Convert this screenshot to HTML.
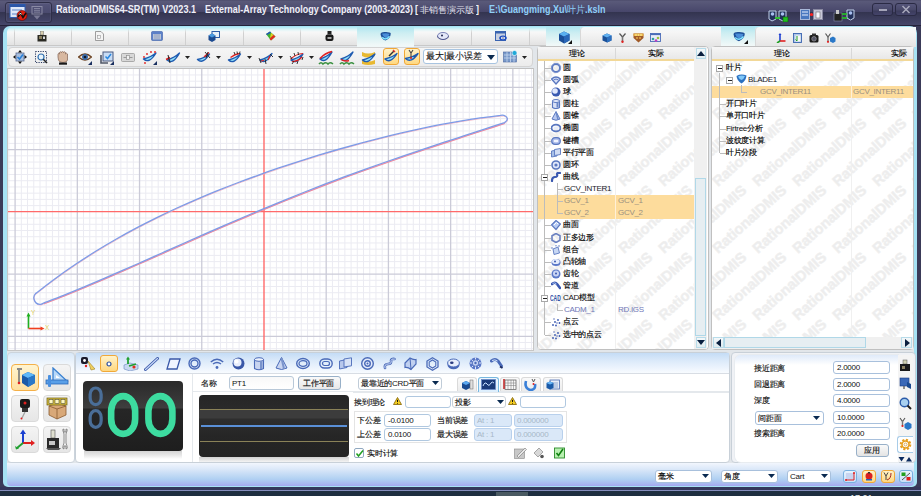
<!DOCTYPE html>
<html><head><meta charset="utf-8">
<style>
*{box-sizing:border-box;margin:0;padding:0}
html,body{width:921px;height:496px;overflow:hidden}
body{position:relative;background:#3a3a58;font-family:"Liberation Sans",sans-serif;font-size:11px;color:#000}
.a{position:absolute}
#title{left:0;top:0;width:921px;height:26px;background:linear-gradient(#484766 0,#5a5a7a 1px,#47466a 12px,#33344f 12px,#45466a 25px,#24223a 25px,#24223a 26px)}
#frame{left:3px;top:25.5px;width:914px;height:461.5px;border-radius:7px 7px 5px 5px;background:#a6e2f4}
#tabs{left:6.5px;top:27px;width:907.5px;height:19px;background:linear-gradient(#b0eaf6 0,#e4f6f8 3px,#f8f8f8 5px,#e4e4e4 17px);border-bottom:1px solid #c8c8c8;border-radius:5px 5px 0 0}
#tb{left:8px;top:47px;width:525px;height:20px;background:linear-gradient(#f6f6f6,#ececec);border:1px solid #d4d4d4;border-radius:4px}
#vp{left:8px;top:69px;width:525px;height:281px;background:#fff;overflow:hidden}
#mid{left:536.5px;top:46px;width:172px;height:304px;background:#fff;border:1px solid #c0c0c0;border-radius:4px}
#right{left:711px;top:46px;width:203px;height:304px;background:#fff;border:1px solid #c0c0c0;border-radius:4px}
#bottom{left:6.5px;top:46px;width:907.5px;height:417px;background:#e2e6ea}
#status{left:6.5px;top:463px;width:907.5px;height:22.5px;background:linear-gradient(#f2f6fd,#d8e6f8 30%,#b0d0f2 70%,#a8b4f0 92%,#a6a6f0);border-radius:0 0 4px 4px}
#task{left:0;top:487px;width:921px;height:9px;background:linear-gradient(#34365a 0,#34365a 2.6px,#8088b8 2.6px,#8890c0 4.2px,#1e2e40 4.2px)}
.hd{top:47px;font-size:9px;line-height:12px;color:#000}
.tr{font-size:8px;line-height:12px;color:#111;white-space:nowrap;letter-spacing:-0.3px}
.tr .cj{font-size:8px;color:#000;-webkit-text-stroke:0.15px #000}
.lb{font-size:8px;line-height:11px;color:#111;white-space:nowrap;letter-spacing:-0.25px}
.cj{font-size:8px;-webkit-text-stroke:0.15px currentColor}
.inp{border:1px solid #b0c8e0;border-radius:3px;background:#fff}
.tt{color:#f0f0f8;font-weight:bold;font-size:10px;top:4px;line-height:12px}
</style></head><body>
<div id="title" class="a"></div>
<div class="a" style="left:5px;top:2px;width:47px;height:21px;border:1px solid #2e2e48;border-radius:3px;background:linear-gradient(#55557a,#4a4a6e 10px,#3a3b58 10px,#44456a);box-shadow:inset 0 0 0 1px rgba(255,255,255,0.06)"></div>
<svg class="a" style="left:9px;top:4px" width="20" height="18" viewBox="0 0 20 18">
<rect x="1" y="0.5" width="15" height="13" fill="#dfe8f8" stroke="#2f5db0"/>
<rect x="1" y="0.5" width="15" height="2.5" fill="#2a56a8"/>
<rect x="3" y="5" width="10" height="2" fill="#9db6e0"/><rect x="3" y="9" width="6" height="2" fill="#9db6e0"/>
<circle cx="13" cy="11.5" r="5" fill="#e02010" stroke="#600" stroke-width="0.6"/>
<path d="M9 13 L11.5 9 L14 13.5 L17 9" stroke="#111" stroke-width="1.6" fill="none"/>
<path d="M10.5 10.5 L11.5 9 L12.3 10.5" stroke="#fff" stroke-width="0.9" fill="none"/>
</svg>
<svg class="a" style="left:31px;top:6px" width="13" height="14" viewBox="0 0 13 14">
<rect x="1" y="0.5" width="10" height="7.5" fill="none" stroke="#8a8aa4" stroke-width="1"/>
<path d="M3 2.5H9M3 4.3H9M3 6.1H9" stroke="#8a8aa4" stroke-width="0.9"/>
<path d="M2.5 9.5 H9.5 L6 13.5Z" fill="#7a7a96"/>
</svg>
<div class="a tt" style="left:56px;transform:scaleX(0.91);transform-origin:0 0">RationalDMIS64-SR(TM) V2023.1</div>
<div class="a tt" style="left:204.5px;transform:scaleX(0.894);transform-origin:0 0">External-Array Technology Company (2003-2023)</div>
<div class="a tt" style="left:415px;transform:scaleX(0.9);transform-origin:0 0">[</div>
<div class="a" style="left:420px;top:4px;line-height:12px;color:#e0e0ea;font-size:9px;letter-spacing:0px;font-family:'Liberation Serif',serif">非销售演示版</div>
<div class="a tt" style="left:476px;transform:scaleX(0.9);transform-origin:0 0">]</div>
<div class="a tt" style="left:488.7px;color:#8fd0f8;transform:scaleX(0.9);transform-origin:0 0">E:\Guangming.Xu\<span style="font-weight:normal;font-family:'Liberation Serif',serif">叶片</span>.ksln</div>
<!-- title right icons -->
<svg class="a" style="left:768px;top:10px" width="21" height="12" viewBox="0 0 21 12">
<path d="M1 1 H8 V9 L4 11 L1 9Z" fill="#22305a" stroke="#c0d0e8" stroke-width="1"/>
<path d="M11 1 H18 V9 L15 11 L11 9Z" fill="#22305a" stroke="#c0d0e8" stroke-width="1"/>
<circle cx="4.5" cy="4" r="1.8" fill="#a8c0f0"/><circle cx="14.5" cy="4" r="1.8" fill="#a8c0f0"/>
<rect x="7" y="7" width="5" height="2" fill="#30c030"/>
<rect x="15" y="7" width="5" height="5" fill="#20c020" stroke="#0a600a" stroke-width="0.6"/>
</svg>
<svg class="a" style="left:800px;top:9px" width="24" height="12" viewBox="0 0 24 12">
<rect x="0.5" y="0.5" width="9" height="10" fill="#4a78c0" stroke="#a8b8d8"/>
<path d="M2 3 H8 M2 6 H8" stroke="#e8f0ff" stroke-width="1"/>
<rect x="13.5" y="0.5" width="9" height="10" fill="#c8c8d8" stroke="#8888a0"/>
<rect x="16" y="3" width="4" height="6" fill="#f8f8ff" stroke="#555" stroke-width="0.5"/>
<circle cx="11.5" cy="5.5" r="1.6" fill="#ff2020"/>
</svg>
<svg class="a" style="left:833px;top:9px" width="23" height="13" viewBox="0 0 23 13">
<rect x="1" y="4" width="8" height="8" fill="#222" stroke="#8890b0" stroke-width="0.6"/>
<rect x="3" y="1" width="3" height="4" fill="#c8c8c8"/>
<path d="M14 1 H21 V9 L17.5 11 L14 9Z" fill="#22305a" stroke="#c0d0e8" stroke-width="1"/>
<circle cx="17.5" cy="4" r="1.8" fill="#a8c0f0"/>
<path d="M9 5 H14 M9 9 H14" stroke="#20d020" stroke-width="1.6"/>
</svg>
<div class="a" style="left:872px;top:3px;width:21px;height:13px;border:1px solid #2a2a44;border-radius:3px;background:linear-gradient(#55557a,#484869 6px,#3c3c5c 7px,#44446a)"></div>
<div class="a" style="left:879px;top:9px;width:8px;height:1.6px;background:#a4a4b8"></div>
<div class="a" style="left:895px;top:3px;width:22px;height:13px;border:1px solid #2a2a44;border-radius:3px;background:linear-gradient(#55557a,#484869 6px,#3c3c5c 7px,#44446a)"></div>
<svg class="a" style="left:901px;top:5px" width="10" height="9" viewBox="0 0 10 9"><path d="M1.5 1 L8.5 8 M8.5 1 L1.5 8" stroke="#a8a8bc" stroke-width="1.5"/></svg>
<div id="frame" class="a"></div>
<div id="bottom" class="a"></div>
<div id="tabs" class="a"></div>
<div class="a" style="left:357px;top:27px;width:57px;height:20px;background:linear-gradient(#b0e6f0,#cdeef2 6px,#f0f8f8 18px)"></div>
<div class="a" style="left:546px;top:27px;width:34px;height:20px;background:linear-gradient(#b0e6f0,#cdeef2 6px,#f0f8f8 18px)"></div>
<div class="a" style="left:721px;top:27px;width:34px;height:20px;background:linear-gradient(#b0e6f0,#cdeef2 6px,#f0f8f8 18px)"></div>
<div class="a" style="left:13.7px;top:28px;width:1px;height:17px;background:linear-gradient(rgba(200,200,200,0),#d0d0d0 30%,#d0d0d0)"></div><div class="a" style="left:70.9px;top:28px;width:1px;height:17px;background:linear-gradient(rgba(200,200,200,0),#d0d0d0 30%,#d0d0d0)"></div><div class="a" style="left:128.1px;top:28px;width:1px;height:17px;background:linear-gradient(rgba(200,200,200,0),#d0d0d0 30%,#d0d0d0)"></div><div class="a" style="left:185.3px;top:28px;width:1px;height:17px;background:linear-gradient(rgba(200,200,200,0),#d0d0d0 30%,#d0d0d0)"></div><div class="a" style="left:242.5px;top:28px;width:1px;height:17px;background:linear-gradient(rgba(200,200,200,0),#d0d0d0 30%,#d0d0d0)"></div><div class="a" style="left:299.7px;top:28px;width:1px;height:17px;background:linear-gradient(rgba(200,200,200,0),#d0d0d0 30%,#d0d0d0)"></div><div class="a" style="left:471.3px;top:28px;width:1px;height:17px;background:linear-gradient(rgba(200,200,200,0),#d0d0d0 30%,#d0d0d0)"></div><div class="a" style="left:528.5px;top:28px;width:1px;height:17px;background:linear-gradient(rgba(200,200,200,0),#d0d0d0 30%,#d0d0d0)"></div>
<!-- tab icons -->
<svg class="a" style="left:37px;top:31px" width="10" height="11" viewBox="0 0 10 11"><rect x="3.5" y="0" width="3" height="4" fill="#d8d0b0" stroke="#666" stroke-width="0.5"/><path d="M0.5 4 H9.5 V10.5 H0.5Z" fill="#2a2a24"/><rect x="2" y="5" width="3" height="3" fill="#8a8060"/><rect x="6" y="5.5" width="2" height="2.5" fill="#d8d8d8"/></svg>
<svg class="a" style="left:95px;top:31px" width="9" height="10" viewBox="0 0 9 10"><path d="M0.5 0.5 H6 L8.5 3 V9.5 H0.5Z" fill="#f4f4f4" stroke="#888" stroke-width="0.8"/><rect x="2.5" y="4.5" width="3" height="3" fill="none" stroke="#999" stroke-width="0.6"/></svg>
<svg class="a" style="left:151px;top:31px" width="12" height="10" viewBox="0 0 12 10"><rect x="0.5" y="0.5" width="11" height="9" rx="1" fill="#5b80c8" stroke="#3a5ea8" stroke-width="0.6"/><rect x="2" y="3" width="8" height="5.5" fill="#b8c4d8"/><path d="M4 3V8.5M6 3V8.5M8 3V8.5" stroke="#8898b8" stroke-width="0.7"/></svg>
<svg class="a" style="left:208px;top:31px" width="12" height="11" viewBox="0 0 12 11"><rect x="4" y="0.5" width="7.5" height="6" fill="#e8f0f8" stroke="#2c5ca8" stroke-width="1"/><path d="M0.5 4.5 L4 2.5 L7.5 4.5 V9 L4 11 L0.5 9Z" fill="#1c4a90"/><path d="M0.5 4.5 L4 2.5 L7.5 4.5 L4 6.5Z" fill="#4a9ae0"/></svg>
<svg class="a" style="left:265px;top:31px" width="11" height="10" viewBox="0 0 11 10"><path d="M1 3 L5 0.5 L10.5 5.5 L6 9.5Z" fill="#40b030"/><path d="M1 3 L5 0.5 L6 1.5 L2 4Z" fill="#2050c0"/><path d="M8 3.5 L10.5 5.5 L6 9.5 L4.5 8Z" fill="#e03020"/><path d="M6 2 L8.5 4 L5 7Z" fill="#e0d020"/></svg>
<svg class="a" style="left:325px;top:31px" width="9" height="10" viewBox="0 0 9 10"><rect x="2.5" y="0" width="4" height="3.5" fill="#222"/><rect x="0.5" y="3.5" width="8" height="6.5" rx="2" fill="#1a1a1a"/><rect x="2.5" y="6" width="4" height="2" fill="#aaa"/></svg>
<svg class="a" style="left:379px;top:31px" width="13" height="11" viewBox="0 0 13 11"><path d="M1.5 3 Q2 0.8 6 1 Q11 0.8 11.8 2.5 Q11.5 7.5 6.5 9.6 Q2.2 8.2 1.5 3Z" fill="#1e5098"/><path d="M3 2.8 Q7 1.8 10.5 3 Q9.5 6 6.5 7 Q4 6 3 2.8Z" fill="#4a8ed8"/><path d="M3.2 6.2 Q6.5 10 10.5 5.2" stroke="#80e4ff" stroke-width="1.5" fill="none"/></svg>
<svg class="a" style="left:437px;top:32px" width="12" height="9" viewBox="0 0 12 9"><ellipse cx="6" cy="4" rx="5.5" ry="3.5" fill="#a8b0d8" stroke="#5860a0" stroke-width="0.7"/><path d="M0.5 4 V5.5 Q6 10 11.5 5.5 V4" fill="#404880"/><ellipse cx="6" cy="4" rx="5" ry="3" fill="#e4e8f8"/><circle cx="5" cy="3.5" r="1" fill="#202850"/></svg>
<svg class="a" style="left:495px;top:31px" width="12" height="10" viewBox="0 0 12 10"><rect x="0.5" y="0.5" width="10" height="9" fill="#c8d0e0" stroke="#3a64b0" stroke-width="1"/><rect x="0.5" y="0.5" width="10" height="2" fill="#3a64b0"/><ellipse cx="8" cy="7" rx="3.8" ry="2.5" fill="#1e4ec0"/><ellipse cx="8" cy="7" rx="2" ry="1.2" fill="#fff"/><circle cx="8" cy="7" r="0.7" fill="#102060"/></svg>
<div class="a" style="left:580px;top:27px;width:141px;height:20px;border-radius:4px 0 0 0;background:linear-gradient(#f0f8fa,#f6f6f6 5px,#e4e4e4);border-left:1px solid #d8d8d8"></div>
<div class="a" style="left:755px;top:27px;width:161px;height:20px;border-radius:4px 0 0 0;background:linear-gradient(#f0f8fa,#f6f6f6 5px,#e4e4e4);border-left:1px solid #d8d8d8"></div>
<svg class="a" style="left:558px;top:31px" width="14" height="13" viewBox="0 0 14 13"><path d="M1 3 L6 0.5 L11.5 3 V9.5 L6 12.5 L1 9.5Z" fill="#1a4e98"/><path d="M1 3 L6 0.5 L11.5 3 L6 5.5Z" fill="#5ab0f0"/><path d="M6 5.5 L11.5 3 V9.5 L6 12.5Z" fill="#2a68b8"/><path d="M10 13 L14 13 L14 9Z" fill="#111"/></svg>
<svg class="a" style="left:602px;top:33px" width="10" height="10" viewBox="0 0 10 10"><path d="M0.5 2.5 L5 0.5 L9.5 2.5 V7.5 L5 9.5 L0.5 7.5Z" fill="#1a5098"/><path d="M0.5 2.5 L5 0.5 L9.5 2.5 L5 4.5Z" fill="#60b0f0"/><path d="M5 4.5 L9.5 2.5 V7.5 L5 9.5Z" fill="#2c70c0"/></svg>
<svg class="a" style="left:619px;top:33px" width="7" height="10" viewBox="0 0 7 10"><path d="M0.5 0.5 L3.5 4 L6.5 0.5" stroke="#555" stroke-width="1.2" fill="none"/><rect x="2.7" y="3.5" width="1.6" height="5" fill="#777"/><circle cx="3.5" cy="8.7" r="1.2" fill="#e02020"/></svg>
<svg class="a" style="left:633px;top:33px" width="11" height="10" viewBox="0 0 11 10"><path d="M0.5 0.5 H10.5 V5 L5.5 9.5 L0.5 5Z" fill="#a05a28"/><path d="M0.5 0.5 H10.5 V3 H0.5Z" fill="#e8b048"/><circle cx="3" cy="2" r="1" fill="#f8e080"/><circle cx="5.5" cy="2" r="1" fill="#f8e080"/><circle cx="8" cy="2" r="1" fill="#f8e080"/><circle cx="4" cy="5" r="0.9" fill="#e8b048"/><circle cx="7" cy="5" r="0.9" fill="#e8b048"/></svg>
<svg class="a" style="left:650px;top:33px" width="11" height="10" viewBox="0 0 11 10"><rect x="0.5" y="0.5" width="10" height="8" fill="#e8ecf8" stroke="#4a6cb8" stroke-width="0.9"/><rect x="0.5" y="0.5" width="10" height="1.6" fill="#4a6cb8"/><circle cx="3" cy="6" r="1.3" fill="#30a0a0"/><circle cx="6" cy="7.5" r="1.3" fill="#c040c0"/><circle cx="8" cy="5" r="1.3" fill="#a0c040"/></svg>
<svg class="a" style="left:732px;top:31px" width="16" height="13" viewBox="0 0 16 13"><path d="M1.5 3 Q2 0.8 6.5 1 Q12 0.8 12.8 2.8 Q12.5 8 7 10.2 Q2.2 8.8 1.5 3Z" fill="#1e5098"/><path d="M3 2.8 Q7.5 1.8 11.5 3.2 Q10.5 6.5 7 7.5 Q4 6.5 3 2.8Z" fill="#4a8ed8"/><path d="M3.2 6.5 Q7 10.5 11.5 5.5" stroke="#80e4ff" stroke-width="1.5" fill="none"/><path d="M12 13 L16 13 L16 9Z" fill="#111"/></svg>
<svg class="a" style="left:776px;top:33px" width="10" height="10" viewBox="0 0 10 10"><path d="M4 8 V1" stroke="#2040d0" stroke-width="1.6"/><path d="M4 8 H9.5" stroke="#e02020" stroke-width="1.6"/><path d="M4 8 L1 10" stroke="#20a020" stroke-width="1.6"/><path d="M2.5 2 L4 0 L5.5 2Z" fill="#2040d0"/></svg>
<svg class="a" style="left:793px;top:33px" width="9" height="10" viewBox="0 0 9 10"><rect x="0.5" y="0.5" width="8" height="9" fill="#b0c8e8" stroke="#3a64b0" stroke-width="0.9"/><rect x="2.5" y="2.5" width="5" height="6" fill="#f8f8f8"/><path d="M4 3 V8 L2.5 6.5" stroke="#20a020" stroke-width="1" fill="none"/></svg>
<svg class="a" style="left:809px;top:33px" width="10" height="10" viewBox="0 0 10 10"><rect x="0.5" y="2" width="9" height="7.5" rx="1.5" fill="#1a1a1a"/><rect x="3" y="0.5" width="4" height="2" fill="#333"/><circle cx="5" cy="5.8" r="2.3" fill="#556" stroke="#aaa" stroke-width="0.6"/></svg>
<svg class="a" style="left:825px;top:33px" width="11" height="10" viewBox="0 0 11 10"><path d="M0.5 0.5 L3 4 L5.5 0.5" stroke="#555" stroke-width="1.1" fill="none"/><rect x="2.3" y="3.5" width="1.4" height="5" fill="#777"/><circle cx="3" cy="8.8" r="1.1" fill="#e02020"/><path d="M5 5 L8 3.5 L10.5 5 V8.5 L8 10 L5 8.5Z" fill="#2a78c8"/></svg>
<div id="tb" class="a"></div>

<!-- toolbar icons -->
<svg class="a" style="left:13px;top:50px" width="14" height="14" viewBox="0 0 14 14"><rect x="3" y="3" width="8" height="8" fill="#a8c0e0" stroke="#5a6a90" stroke-width="0.8"/><path d="M4.5 7 L6.5 9 L10 4.5" stroke="#2a80d8" stroke-width="1.6" fill="none"/><path d="M7 0L9 2.5H5Z M7 14L5 11.5H9Z M0 7L2.5 5V9Z M14 7L11.5 9V5Z" fill="#111"/></svg>
<svg class="a" style="left:35px;top:51px" width="13" height="13" viewBox="0 0 13 13"><rect x="0.5" y="0.5" width="11" height="11" fill="none" stroke="#2a3a60" stroke-width="1" stroke-dasharray="1.2 1.2"/><circle cx="6" cy="6" r="3" fill="#e8f4fc" stroke="#3070b0" stroke-width="1.2"/><path d="M8.3 8.3L12 12" stroke="#222" stroke-width="1.6"/></svg>
<svg class="a" style="left:57px;top:51px" width="12" height="14" viewBox="0 0 12 14"><path d="M1 6 V3 Q1.5 1.5 2.5 3 V1.5 Q3.5 0 4.5 1.5 V1 Q5.5 -0.5 6.5 1 V1.5 Q7.5 0 8.5 1.5 V3 Q9.5 1.5 10.5 3 V9 Q10 11.5 6 11.5 Q2 11.5 1.5 9Z" fill="#d8b8a0" stroke="#806050" stroke-width="0.7"/><rect x="2" y="11.5" width="8" height="2.2" fill="#1a1a1a"/></svg>
<svg class="a" style="left:78px;top:52px" width="14" height="12" viewBox="0 0 14 12"><path d="M0.5 5 Q7 -1 13.5 5 Q7 11 0.5 5Z" fill="#f4e8d8" stroke="#6a4020" stroke-width="1.2"/><circle cx="7" cy="5" r="3" fill="#3a6aa8"/><circle cx="7" cy="5" r="1.3" fill="#101828"/></svg>
<svg class="a" style="left:88px;top:61px" width="4" height="4" viewBox="0 0 4 4"><path d="M4 0V4H0Z" fill="#1a3060"/></svg>
<svg class="a" style="left:100px;top:51px" width="14" height="14" viewBox="0 0 14 14"><rect x="3" y="1" width="10" height="9" fill="#c8dcf4" stroke="#4a5a80" stroke-width="1"/><path d="M5.5 5.5 L7.5 7.5 L11 3" stroke="#2a88e0" stroke-width="1.5" fill="none"/><path d="M1 4 V12 H8" stroke="#505868" stroke-width="1.6" fill="none"/></svg>
<svg class="a" style="left:110px;top:61px" width="4" height="4" viewBox="0 0 4 4"><path d="M4 0V4H0Z" fill="#1a3060"/></svg>
<svg class="a" style="left:121px;top:53px" width="14" height="9" viewBox="0 0 14 9"><rect x="0.5" y="0.5" width="13" height="8" rx="1" fill="#d8d8d8" stroke="#9a9a9a" stroke-width="0.8"/><path d="M2.5 4.5H11.5" stroke="#888" stroke-width="0.8"/><rect x="5.5" y="2.5" width="3" height="4" fill="#f0f0f0" stroke="#888" stroke-width="0.6"/></svg>
<svg class="a" style="left:142px;top:51px" width="15" height="14" viewBox="0 0 15 14"><path d="M1.5 8.0 Q7.2 13.2 14.0 2.0 Q9.2 6.0 1.5 8.0Z" fill="#90e0fa" stroke="#1e5ab0" stroke-width="1.4" stroke-linejoin="round"/><circle cx="2" cy="6" r="0.9" fill="#e02020"/><circle cx="5" cy="3" r="0.9" fill="#e02020"/><circle cx="9" cy="1" r="0.9" fill="#e02020"/><circle cx="13" cy="1" r="0.9" fill="#e02020"/><circle cx="3" cy="12" r="0.9" fill="#e02020"/></svg>
<svg class="a" style="left:153px;top:61px" width="4" height="4" viewBox="0 0 4 4"><path d="M4 0V4H0Z" fill="#1a3060"/></svg>
<svg class="a" style="left:165px;top:51px" width="16" height="14" viewBox="0 0 16 14"><path d="M2.0 9.0 Q7.8 14.2 14.5 2.0 Q9.8 6.5 2.0 9.0Z" fill="#90e0fa" stroke="#1e5ab0" stroke-width="1.4" stroke-linejoin="round"/><path d="M1 8.5 L5 6.5" stroke="#e02020" stroke-width="1.4"/><path d="M3 4 L5 12" stroke="#222" stroke-width="1"/></svg>
<svg class="a" style="left:185px;top:56px" width="5" height="3" viewBox="0 0 5 3"><path d="M0 0H5L2.5 3Z" fill="#222"/></svg>
<svg class="a" style="left:196px;top:51px" width="16" height="14" viewBox="0 0 16 14"><path d="M1.5 8.5 Q7.0 13.7 13.5 3.0 Q9.0 6.8 1.5 8.5Z" fill="#90e0fa" stroke="#1e5ab0" stroke-width="1.4" stroke-linejoin="round"/><path d="M8 6 L13 1.5" stroke="#e02020" stroke-width="1.4"/><path d="M9 1 L14 7 M12 1 L10 7" stroke="#222" stroke-width="0.9"/></svg>
<svg class="a" style="left:216px;top:56px" width="5" height="3" viewBox="0 0 5 3"><path d="M0 0H5L2.5 3Z" fill="#222"/></svg>
<svg class="a" style="left:227px;top:51px" width="16" height="14" viewBox="0 0 16 14"><path d="M1.5 9.0 Q7.0 14.2 13.5 3.0 Q9.0 7.0 1.5 9.0Z" fill="#90e0fa" stroke="#1e5ab0" stroke-width="1.4" stroke-linejoin="round"/><path d="M3.5 6.5 Q8 3 12.5 2.5" stroke="#e02020" stroke-width="1.3" fill="none"/><path d="M7 1 L8 3.5 M10 0.5 L10.5 3 M13 0.5 L12.5 3" stroke="#222" stroke-width="0.9"/></svg>
<svg class="a" style="left:247px;top:56px" width="5" height="3" viewBox="0 0 5 3"><path d="M0 0H5L2.5 3Z" fill="#222"/></svg>
<svg class="a" style="left:258px;top:51px" width="16" height="14" viewBox="0 0 16 14"><path d="M2.0 9.0 Q7.5 14.2 14.0 2.5 Q9.5 6.8 2.0 9.0Z" fill="#90e0fa" stroke="#1e5ab0" stroke-width="1.4" stroke-linejoin="round"/><path d="M3 10 L6 9.5 M10 9 L12 5" stroke="#e02020" stroke-width="1.2"/><path d="M1 7 L3 12 M7 8 L8 13 M12 3 L15 6" stroke="#222" stroke-width="0.9"/></svg>
<svg class="a" style="left:278px;top:56px" width="5" height="3" viewBox="0 0 5 3"><path d="M0 0H5L2.5 3Z" fill="#222"/></svg>
<svg class="a" style="left:289px;top:51px" width="16" height="14" viewBox="0 0 16 14"><path d="M2.0 9.0 Q7.5 14.2 14.0 3.0 Q9.5 7.0 2.0 9.0Z" fill="#90e0fa" stroke="#1e5ab0" stroke-width="1.4" stroke-linejoin="round"/><path d="M1.5 8 Q7 3 14 2.5 M3 10.5 Q9 10.5 13 6" stroke="#e02020" stroke-width="1.2" fill="none"/><path d="M1 5 L3 8 M5 2 L6 5 M9 1 L9.5 4 M3 13 L5 10 M8 13 L9 10 M13 9 L14 6" stroke="#222" stroke-width="0.9"/></svg>
<svg class="a" style="left:309px;top:56px" width="5" height="3" viewBox="0 0 5 3"><path d="M0 0H5L2.5 3Z" fill="#222"/></svg>
<svg class="a" style="left:318px;top:50px" width="16" height="16" viewBox="0 0 16 16"><path d="M2.0 9.0 Q7.5 14.2 14.0 2.0 Q9.5 6.5 2.0 9.0Z" fill="#90e0fa" stroke="#1e5ab0" stroke-width="1.4" stroke-linejoin="round"/><path d="M2 8.5 Q7 3 14 1.5" stroke="#e02020" stroke-width="1.6" fill="none"/><path d="M1 14 Q3 11.5 5 14 Q8 11.5 10 14 Q12 11.5 15 14" stroke="#3a9040" stroke-width="1.6" fill="none"/></svg>
<svg class="a" style="left:339px;top:50px" width="16" height="16" viewBox="0 0 16 16"><path d="M2.0 9.0 Q7.5 14.2 14.0 2.0 Q9.5 6.5 2.0 9.0Z" fill="#90e0fa" stroke="#1e5ab0" stroke-width="1.4" stroke-linejoin="round"/><path d="M2 9.5 Q6 12 10 10.5" stroke="#e02020" stroke-width="1.4" fill="none"/><path d="M1 14 Q3 11.5 5 14 Q8 11.5 10 14 Q12 11.5 15 14" stroke="#3a9040" stroke-width="1.6" fill="none"/></svg>
<svg class="a" style="left:361px;top:50px" width="16" height="16" viewBox="0 0 16 16"><path d="M1 2 Q7 5 14 2 V6 Q7 9 1 6Z" fill="#e8b830"/><path d="M1 10 Q7 13 14 10 V14 Q7 16 1 14Z" fill="#e8b830"/><path d="M1.5 10.0 Q7.2 15.2 14.0 4.0 Q9.2 8.0 1.5 10.0Z" fill="#90e0fa" stroke="#1e5ab0" stroke-width="1.4" stroke-linejoin="round"/></svg>
<div class="a" style="left:383px;top:48px;width:16px;height:17px;border:1px solid #f0a838;border-radius:3px;background:linear-gradient(#fff2c8,#ffd880)"></div>
<svg class="a" style="left:383px;top:49px" width="16" height="15" viewBox="0 0 16 15"><path d="M2.0 10.0 Q7.5 15.2 14.0 4.5 Q9.5 8.2 2.0 10.0Z" fill="#90e0fa" stroke="#1e5ab0" stroke-width="1.4" stroke-linejoin="round"/><path d="M6 7 L11 2" stroke="#333" stroke-width="1.4"/><path d="M10 1 L12 3" stroke="#e03030" stroke-width="1.4"/></svg>
<div class="a" style="left:404px;top:48px;width:16px;height:17px;border:1px solid #f0a838;border-radius:3px;background:linear-gradient(#fff2c8,#ffd880)"></div>
<svg class="a" style="left:404px;top:49px" width="16" height="15" viewBox="0 0 16 15"><path d="M1.5 9.5 Q7.2 14.7 14.0 4.5 Q9.2 8.0 1.5 9.5Z" fill="#90e0fa" stroke="#1e5ab0" stroke-width="1.4" stroke-linejoin="round"/><path d="M5 1 L7 4 L9 1 M7 4 V9" stroke="#444" stroke-width="1.1" fill="none"/><circle cx="7" cy="9" r="1" fill="#e02020"/></svg>
<div class="a" style="left:423px;top:49px;width:75px;height:15px;border:1px solid #a8c4e0;border-radius:3px;background:#fff"></div>
<div class="a" style="left:426px;top:50px;font-size:9px;line-height:13px;color:#111;-webkit-text-stroke:0.1px #111">最大|最小误差</div>
<svg class="a" style="left:487px;top:55px" width="8" height="5" viewBox="0 0 8 5"><path d="M0 0H8L4 5Z" fill="#0a2a50"/></svg>
<svg class="a" style="left:503px;top:50px" width="15" height="13" viewBox="0 0 15 13"><rect x="0.5" y="2" width="13" height="10" fill="#7898c8" stroke="#4a68a0" stroke-width="0.6"/><path d="M1 5H13M1 8H13M4 2V12M7.5 2V12M11 2V12" stroke="#c8d8f0" stroke-width="0.8"/><circle cx="11.5" cy="3" r="2.5" fill="#20a8d8" stroke="#fff" stroke-width="0.6"/></svg>
<svg class="a" style="left:522px;top:56px" width="5" height="3" viewBox="0 0 5 3"><path d="M0 0H5L2.5 3Z" fill="#222"/></svg>
<div id="vp" class="a"></div>
<svg class="a" style="left:8px;top:69px" width="525" height="281" viewBox="0 0 525 281"><line x1="0.88" y1="0" x2="0.88" y2="281" stroke="#ebebf2" stroke-width="1"/><line x1="13.32" y1="0" x2="13.32" y2="281" stroke="#ebebf2" stroke-width="1"/><line x1="19.54" y1="0" x2="19.54" y2="281" stroke="#ebebf2" stroke-width="1"/><line x1="25.77" y1="0" x2="25.77" y2="281" stroke="#ebebf2" stroke-width="1"/><line x1="31.99" y1="0" x2="31.99" y2="281" stroke="#ebebf2" stroke-width="1"/><line x1="38.21" y1="0" x2="38.21" y2="281" stroke="#ebebf2" stroke-width="1"/><line x1="44.43" y1="0" x2="44.43" y2="281" stroke="#ebebf2" stroke-width="1"/><line x1="50.65" y1="0" x2="50.65" y2="281" stroke="#ebebf2" stroke-width="1"/><line x1="56.88" y1="0" x2="56.88" y2="281" stroke="#ebebf2" stroke-width="1"/><line x1="63.10" y1="0" x2="63.10" y2="281" stroke="#ebebf2" stroke-width="1"/><line x1="75.54" y1="0" x2="75.54" y2="281" stroke="#ebebf2" stroke-width="1"/><line x1="81.76" y1="0" x2="81.76" y2="281" stroke="#ebebf2" stroke-width="1"/><line x1="87.99" y1="0" x2="87.99" y2="281" stroke="#ebebf2" stroke-width="1"/><line x1="94.21" y1="0" x2="94.21" y2="281" stroke="#ebebf2" stroke-width="1"/><line x1="100.43" y1="0" x2="100.43" y2="281" stroke="#ebebf2" stroke-width="1"/><line x1="106.65" y1="0" x2="106.65" y2="281" stroke="#ebebf2" stroke-width="1"/><line x1="112.87" y1="0" x2="112.87" y2="281" stroke="#ebebf2" stroke-width="1"/><line x1="119.10" y1="0" x2="119.10" y2="281" stroke="#ebebf2" stroke-width="1"/><line x1="125.32" y1="0" x2="125.32" y2="281" stroke="#ebebf2" stroke-width="1"/><line x1="137.76" y1="0" x2="137.76" y2="281" stroke="#ebebf2" stroke-width="1"/><line x1="143.98" y1="0" x2="143.98" y2="281" stroke="#ebebf2" stroke-width="1"/><line x1="150.21" y1="0" x2="150.21" y2="281" stroke="#ebebf2" stroke-width="1"/><line x1="156.43" y1="0" x2="156.43" y2="281" stroke="#ebebf2" stroke-width="1"/><line x1="162.65" y1="0" x2="162.65" y2="281" stroke="#ebebf2" stroke-width="1"/><line x1="168.87" y1="0" x2="168.87" y2="281" stroke="#ebebf2" stroke-width="1"/><line x1="175.09" y1="0" x2="175.09" y2="281" stroke="#ebebf2" stroke-width="1"/><line x1="181.32" y1="0" x2="181.32" y2="281" stroke="#ebebf2" stroke-width="1"/><line x1="187.54" y1="0" x2="187.54" y2="281" stroke="#ebebf2" stroke-width="1"/><line x1="199.98" y1="0" x2="199.98" y2="281" stroke="#ebebf2" stroke-width="1"/><line x1="206.20" y1="0" x2="206.20" y2="281" stroke="#ebebf2" stroke-width="1"/><line x1="212.43" y1="0" x2="212.43" y2="281" stroke="#ebebf2" stroke-width="1"/><line x1="218.65" y1="0" x2="218.65" y2="281" stroke="#ebebf2" stroke-width="1"/><line x1="224.87" y1="0" x2="224.87" y2="281" stroke="#ebebf2" stroke-width="1"/><line x1="231.09" y1="0" x2="231.09" y2="281" stroke="#ebebf2" stroke-width="1"/><line x1="237.31" y1="0" x2="237.31" y2="281" stroke="#ebebf2" stroke-width="1"/><line x1="243.54" y1="0" x2="243.54" y2="281" stroke="#ebebf2" stroke-width="1"/><line x1="249.76" y1="0" x2="249.76" y2="281" stroke="#ebebf2" stroke-width="1"/><line x1="262.20" y1="0" x2="262.20" y2="281" stroke="#ebebf2" stroke-width="1"/><line x1="268.42" y1="0" x2="268.42" y2="281" stroke="#ebebf2" stroke-width="1"/><line x1="274.65" y1="0" x2="274.65" y2="281" stroke="#ebebf2" stroke-width="1"/><line x1="280.87" y1="0" x2="280.87" y2="281" stroke="#ebebf2" stroke-width="1"/><line x1="287.09" y1="0" x2="287.09" y2="281" stroke="#ebebf2" stroke-width="1"/><line x1="293.31" y1="0" x2="293.31" y2="281" stroke="#ebebf2" stroke-width="1"/><line x1="299.53" y1="0" x2="299.53" y2="281" stroke="#ebebf2" stroke-width="1"/><line x1="305.76" y1="0" x2="305.76" y2="281" stroke="#ebebf2" stroke-width="1"/><line x1="311.98" y1="0" x2="311.98" y2="281" stroke="#ebebf2" stroke-width="1"/><line x1="324.42" y1="0" x2="324.42" y2="281" stroke="#ebebf2" stroke-width="1"/><line x1="330.64" y1="0" x2="330.64" y2="281" stroke="#ebebf2" stroke-width="1"/><line x1="336.87" y1="0" x2="336.87" y2="281" stroke="#ebebf2" stroke-width="1"/><line x1="343.09" y1="0" x2="343.09" y2="281" stroke="#ebebf2" stroke-width="1"/><line x1="349.31" y1="0" x2="349.31" y2="281" stroke="#ebebf2" stroke-width="1"/><line x1="355.53" y1="0" x2="355.53" y2="281" stroke="#ebebf2" stroke-width="1"/><line x1="361.75" y1="0" x2="361.75" y2="281" stroke="#ebebf2" stroke-width="1"/><line x1="367.98" y1="0" x2="367.98" y2="281" stroke="#ebebf2" stroke-width="1"/><line x1="374.20" y1="0" x2="374.20" y2="281" stroke="#ebebf2" stroke-width="1"/><line x1="386.64" y1="0" x2="386.64" y2="281" stroke="#ebebf2" stroke-width="1"/><line x1="392.86" y1="0" x2="392.86" y2="281" stroke="#ebebf2" stroke-width="1"/><line x1="399.09" y1="0" x2="399.09" y2="281" stroke="#ebebf2" stroke-width="1"/><line x1="405.31" y1="0" x2="405.31" y2="281" stroke="#ebebf2" stroke-width="1"/><line x1="411.53" y1="0" x2="411.53" y2="281" stroke="#ebebf2" stroke-width="1"/><line x1="417.75" y1="0" x2="417.75" y2="281" stroke="#ebebf2" stroke-width="1"/><line x1="423.97" y1="0" x2="423.97" y2="281" stroke="#ebebf2" stroke-width="1"/><line x1="430.20" y1="0" x2="430.20" y2="281" stroke="#ebebf2" stroke-width="1"/><line x1="436.42" y1="0" x2="436.42" y2="281" stroke="#ebebf2" stroke-width="1"/><line x1="448.86" y1="0" x2="448.86" y2="281" stroke="#ebebf2" stroke-width="1"/><line x1="455.08" y1="0" x2="455.08" y2="281" stroke="#ebebf2" stroke-width="1"/><line x1="461.31" y1="0" x2="461.31" y2="281" stroke="#ebebf2" stroke-width="1"/><line x1="467.53" y1="0" x2="467.53" y2="281" stroke="#ebebf2" stroke-width="1"/><line x1="473.75" y1="0" x2="473.75" y2="281" stroke="#ebebf2" stroke-width="1"/><line x1="479.97" y1="0" x2="479.97" y2="281" stroke="#ebebf2" stroke-width="1"/><line x1="486.19" y1="0" x2="486.19" y2="281" stroke="#ebebf2" stroke-width="1"/><line x1="492.42" y1="0" x2="492.42" y2="281" stroke="#ebebf2" stroke-width="1"/><line x1="498.64" y1="0" x2="498.64" y2="281" stroke="#ebebf2" stroke-width="1"/><line x1="511.08" y1="0" x2="511.08" y2="281" stroke="#ebebf2" stroke-width="1"/><line x1="517.30" y1="0" x2="517.30" y2="281" stroke="#ebebf2" stroke-width="1"/><line x1="523.53" y1="0" x2="523.53" y2="281" stroke="#ebebf2" stroke-width="1"/><line x1="0" y1="5.96" x2="525" y2="5.96" stroke="#ebebf2" stroke-width="1"/><line x1="0" y1="12.18" x2="525" y2="12.18" stroke="#ebebf2" stroke-width="1"/><line x1="0" y1="24.62" x2="525" y2="24.62" stroke="#ebebf2" stroke-width="1"/><line x1="0" y1="30.84" x2="525" y2="30.84" stroke="#ebebf2" stroke-width="1"/><line x1="0" y1="37.07" x2="525" y2="37.07" stroke="#ebebf2" stroke-width="1"/><line x1="0" y1="43.29" x2="525" y2="43.29" stroke="#ebebf2" stroke-width="1"/><line x1="0" y1="49.51" x2="525" y2="49.51" stroke="#ebebf2" stroke-width="1"/><line x1="0" y1="55.73" x2="525" y2="55.73" stroke="#ebebf2" stroke-width="1"/><line x1="0" y1="61.95" x2="525" y2="61.95" stroke="#ebebf2" stroke-width="1"/><line x1="0" y1="68.18" x2="525" y2="68.18" stroke="#ebebf2" stroke-width="1"/><line x1="0" y1="74.40" x2="525" y2="74.40" stroke="#ebebf2" stroke-width="1"/><line x1="0" y1="86.84" x2="525" y2="86.84" stroke="#ebebf2" stroke-width="1"/><line x1="0" y1="93.06" x2="525" y2="93.06" stroke="#ebebf2" stroke-width="1"/><line x1="0" y1="99.29" x2="525" y2="99.29" stroke="#ebebf2" stroke-width="1"/><line x1="0" y1="105.51" x2="525" y2="105.51" stroke="#ebebf2" stroke-width="1"/><line x1="0" y1="111.73" x2="525" y2="111.73" stroke="#ebebf2" stroke-width="1"/><line x1="0" y1="117.95" x2="525" y2="117.95" stroke="#ebebf2" stroke-width="1"/><line x1="0" y1="124.17" x2="525" y2="124.17" stroke="#ebebf2" stroke-width="1"/><line x1="0" y1="130.40" x2="525" y2="130.40" stroke="#ebebf2" stroke-width="1"/><line x1="0" y1="136.62" x2="525" y2="136.62" stroke="#ebebf2" stroke-width="1"/><line x1="0" y1="149.06" x2="525" y2="149.06" stroke="#ebebf2" stroke-width="1"/><line x1="0" y1="155.28" x2="525" y2="155.28" stroke="#ebebf2" stroke-width="1"/><line x1="0" y1="161.51" x2="525" y2="161.51" stroke="#ebebf2" stroke-width="1"/><line x1="0" y1="167.73" x2="525" y2="167.73" stroke="#ebebf2" stroke-width="1"/><line x1="0" y1="173.95" x2="525" y2="173.95" stroke="#ebebf2" stroke-width="1"/><line x1="0" y1="180.17" x2="525" y2="180.17" stroke="#ebebf2" stroke-width="1"/><line x1="0" y1="186.39" x2="525" y2="186.39" stroke="#ebebf2" stroke-width="1"/><line x1="0" y1="192.62" x2="525" y2="192.62" stroke="#ebebf2" stroke-width="1"/><line x1="0" y1="198.84" x2="525" y2="198.84" stroke="#ebebf2" stroke-width="1"/><line x1="0" y1="211.28" x2="525" y2="211.28" stroke="#ebebf2" stroke-width="1"/><line x1="0" y1="217.50" x2="525" y2="217.50" stroke="#ebebf2" stroke-width="1"/><line x1="0" y1="223.73" x2="525" y2="223.73" stroke="#ebebf2" stroke-width="1"/><line x1="0" y1="229.95" x2="525" y2="229.95" stroke="#ebebf2" stroke-width="1"/><line x1="0" y1="236.17" x2="525" y2="236.17" stroke="#ebebf2" stroke-width="1"/><line x1="0" y1="242.39" x2="525" y2="242.39" stroke="#ebebf2" stroke-width="1"/><line x1="0" y1="248.61" x2="525" y2="248.61" stroke="#ebebf2" stroke-width="1"/><line x1="0" y1="254.84" x2="525" y2="254.84" stroke="#ebebf2" stroke-width="1"/><line x1="0" y1="261.06" x2="525" y2="261.06" stroke="#ebebf2" stroke-width="1"/><line x1="0" y1="273.50" x2="525" y2="273.50" stroke="#ebebf2" stroke-width="1"/><line x1="0" y1="279.72" x2="525" y2="279.72" stroke="#ebebf2" stroke-width="1"/><line x1="7.10" y1="0" x2="7.10" y2="281" stroke="#cbcbd8" stroke-width="1.3"/><line x1="69.32" y1="0" x2="69.32" y2="281" stroke="#cbcbd8" stroke-width="1.3"/><line x1="131.54" y1="0" x2="131.54" y2="281" stroke="#cbcbd8" stroke-width="1.3"/><line x1="193.76" y1="0" x2="193.76" y2="281" stroke="#cbcbd8" stroke-width="1.3"/><line x1="318.20" y1="0" x2="318.20" y2="281" stroke="#cbcbd8" stroke-width="1.3"/><line x1="380.42" y1="0" x2="380.42" y2="281" stroke="#cbcbd8" stroke-width="1.3"/><line x1="442.64" y1="0" x2="442.64" y2="281" stroke="#cbcbd8" stroke-width="1.3"/><line x1="504.86" y1="0" x2="504.86" y2="281" stroke="#cbcbd8" stroke-width="1.3"/><line x1="0" y1="18.40" x2="525" y2="18.40" stroke="#cbcbd8" stroke-width="1.3"/><line x1="0" y1="80.62" x2="525" y2="80.62" stroke="#cbcbd8" stroke-width="1.3"/><line x1="0" y1="205.06" x2="525" y2="205.06" stroke="#cbcbd8" stroke-width="1.3"/><line x1="0" y1="267.28" x2="525" y2="267.28" stroke="#cbcbd8" stroke-width="1.3"/><line x1="256" y1="0" x2="256" y2="281" stroke="#ff6a6a" stroke-width="1.4"/><line x1="0" y1="142.60" x2="525" y2="142.60" stroke="#ff6a6a" stroke-width="1.4"/>
<g transform="translate(-8,-69)" fill="none">
<path d="M500.50 115.40 C497.13 115.82 487.02 116.98 480.28 117.93 C473.54 118.87 466.80 119.92 460.07 121.05 C453.33 122.18 446.59 123.40 439.85 124.70 C433.11 126.00 426.37 127.38 419.63 128.82 C412.89 130.27 406.15 131.79 399.41 133.37 C392.67 134.95 385.93 136.60 379.20 138.31 C372.46 140.01 365.72 141.78 358.98 143.61 C352.24 145.43 345.50 147.31 338.76 149.25 C332.02 151.19 325.28 153.19 318.54 155.24 C311.80 157.29 305.07 159.39 298.33 161.56 C291.59 163.73 284.85 165.95 278.11 168.24 C271.37 170.53 264.63 172.87 257.89 175.29 C251.15 177.71 244.41 180.19 237.67 182.75 C230.93 185.31 224.20 187.94 217.46 190.66 C210.72 193.38 203.98 196.17 197.24 199.06 C190.50 201.96 183.76 204.94 177.02 208.03 C170.28 211.12 163.54 214.31 156.80 217.63 C150.07 220.94 143.33 224.36 136.59 227.93 C129.85 231.50 123.11 235.19 116.37 239.04 C109.63 242.89 102.89 246.88 96.15 251.05 C89.41 255.22 82.67 259.54 75.93 264.07 C69.20 268.60 62.46 273.29 55.72 278.22 C48.98 283.14 38.87 291.06 35.50 293.62 C33.90 295.22 33.4 297.6 34.2 299.8 C35 302.4 37.5 304.8 41 304.3 L43.50 303.11 C46.84 301.81 56.86 298.00 63.54 295.34 C70.22 292.68 76.91 289.94 83.59 287.16 C90.27 284.38 96.95 281.53 103.63 278.67 C110.31 275.80 116.99 272.88 123.67 269.95 C130.36 267.03 137.04 264.06 143.72 261.10 C150.40 258.13 157.08 255.15 163.76 252.17 C170.44 249.20 177.12 246.21 183.80 243.25 C190.49 240.28 197.17 237.31 203.85 234.37 C210.53 231.43 217.21 228.50 223.89 225.60 C230.57 222.70 237.25 219.82 243.93 216.98 C250.62 214.13 257.30 211.31 263.98 208.53 C270.66 205.75 277.34 203.00 284.02 200.29 C290.70 197.58 297.38 194.90 304.07 192.27 C310.75 189.63 317.43 187.04 324.11 184.48 C330.79 181.92 337.47 179.41 344.15 176.93 C350.83 174.45 357.51 172.01 364.20 169.60 C370.88 167.20 377.56 164.83 384.24 162.50 C390.92 160.16 397.60 157.86 404.28 155.58 C410.96 153.30 417.64 151.06 424.33 148.83 C431.01 146.60 437.69 144.40 444.37 142.21 C451.05 140.01 457.73 137.84 464.41 135.66 C471.09 133.49 477.78 131.32 484.46 129.15 C491.14 126.97 501.16 123.69 504.50 122.60 C506.6 121.40 507.6 120.2 507.3 118.6 C507 116.6 504.5 114.6 500.50 115.40" stroke="#f4b0c0" stroke-width="0.9" transform="translate(0.2,0.7)"/>
<path d="M43.50 303.11 C46.84 301.81 56.86 298.00 63.54 295.34 C70.22 292.68 76.91 289.94 83.59 287.16 C90.27 284.38 96.95 281.53 103.63 278.67 C110.31 275.80 116.99 272.88 123.67 269.95 C130.36 267.03 137.04 264.06 143.72 261.10 C150.40 258.13 157.08 255.15 163.76 252.17 C170.44 249.20 177.12 246.21 183.80 243.25 C190.49 240.28 197.17 237.31 203.85 234.37 C210.53 231.43 217.21 228.50 223.89 225.60 C230.57 222.70 237.25 219.82 243.93 216.98 C250.62 214.13 257.30 211.31 263.98 208.53 C270.66 205.75 277.34 203.00 284.02 200.29 C290.70 197.58 297.38 194.90 304.07 192.27 C310.75 189.63 317.43 187.04 324.11 184.48 C330.79 181.92 337.47 179.41 344.15 176.93 C350.83 174.45 357.51 172.01 364.20 169.60 C370.88 167.20 377.56 164.83 384.24 162.50 C390.92 160.16 397.60 157.86 404.28 155.58 C410.96 153.30 417.64 151.06 424.33 148.83 C431.01 146.60 437.69 144.40 444.37 142.21 C451.05 140.01 457.73 137.84 464.41 135.66 C471.09 133.49 477.78 131.32 484.46 129.15 C491.14 126.97 501.16 123.69 504.50 122.60" stroke="#f08aa0" stroke-width="1.1" transform="translate(0.3,0.9)"/>
<path d="M500.50 115.40 C497.13 115.82 487.02 116.98 480.28 117.93 C473.54 118.87 466.80 119.92 460.07 121.05 C453.33 122.18 446.59 123.40 439.85 124.70 C433.11 126.00 426.37 127.38 419.63 128.82 C412.89 130.27 406.15 131.79 399.41 133.37 C392.67 134.95 385.93 136.60 379.20 138.31 C372.46 140.01 365.72 141.78 358.98 143.61 C352.24 145.43 345.50 147.31 338.76 149.25 C332.02 151.19 325.28 153.19 318.54 155.24 C311.80 157.29 305.07 159.39 298.33 161.56 C291.59 163.73 284.85 165.95 278.11 168.24 C271.37 170.53 264.63 172.87 257.89 175.29 C251.15 177.71 244.41 180.19 237.67 182.75 C230.93 185.31 224.20 187.94 217.46 190.66 C210.72 193.38 203.98 196.17 197.24 199.06 C190.50 201.96 183.76 204.94 177.02 208.03 C170.28 211.12 163.54 214.31 156.80 217.63 C150.07 220.94 143.33 224.36 136.59 227.93 C129.85 231.50 123.11 235.19 116.37 239.04 C109.63 242.89 102.89 246.88 96.15 251.05 C89.41 255.22 82.67 259.54 75.93 264.07 C69.20 268.60 62.46 273.29 55.72 278.22 C48.98 283.14 38.87 291.06 35.50 293.62 C33.90 295.22 33.4 297.6 34.2 299.8 C35 302.4 37.5 304.8 41 304.3 L43.50 303.11 C46.84 301.81 56.86 298.00 63.54 295.34 C70.22 292.68 76.91 289.94 83.59 287.16 C90.27 284.38 96.95 281.53 103.63 278.67 C110.31 275.80 116.99 272.88 123.67 269.95 C130.36 267.03 137.04 264.06 143.72 261.10 C150.40 258.13 157.08 255.15 163.76 252.17 C170.44 249.20 177.12 246.21 183.80 243.25 C190.49 240.28 197.17 237.31 203.85 234.37 C210.53 231.43 217.21 228.50 223.89 225.60 C230.57 222.70 237.25 219.82 243.93 216.98 C250.62 214.13 257.30 211.31 263.98 208.53 C270.66 205.75 277.34 203.00 284.02 200.29 C290.70 197.58 297.38 194.90 304.07 192.27 C310.75 189.63 317.43 187.04 324.11 184.48 C330.79 181.92 337.47 179.41 344.15 176.93 C350.83 174.45 357.51 172.01 364.20 169.60 C370.88 167.20 377.56 164.83 384.24 162.50 C390.92 160.16 397.60 157.86 404.28 155.58 C410.96 153.30 417.64 151.06 424.33 148.83 C431.01 146.60 437.69 144.40 444.37 142.21 C451.05 140.01 457.73 137.84 464.41 135.66 C471.09 133.49 477.78 131.32 484.46 129.15 C491.14 126.97 501.16 123.69 504.50 122.60 C506.6 121.40 507.6 120.2 507.3 118.6 C507 116.6 504.5 114.6 500.50 115.40" stroke="#7c9ce8" stroke-width="1.3"/>
</g>
<g transform="translate(-8,-69)">
<path d="M28.5 328.5 V315" stroke="#20b020" stroke-width="1.6"/><path d="M26.5 316.5 L28.5 312.5 L30.5 316.5Z" fill="#20b020"/>
<path d="M28.5 328.5 H42" stroke="#f04020" stroke-width="1.6"/><path d="M40.5 326.5 L44.5 328.5 L40.5 330.5Z" fill="#f04020"/>
<text x="31" y="315" font-size="6.5" fill="#e0d060" font-family="Liberation Sans">Y</text>
<text x="45" y="330" font-size="6.5" fill="#e0d060" font-family="Liberation Sans">X</text>
</g>
</svg>
<div id="vpb" class="a" style="left:7px;top:68px;width:527px;height:283px;border:1px solid #c6c6c6;border-top-color:#c0c0c0"></div>
<div id="mid" class="a"></div>
<div id="right" class="a"></div>
<!--PANELS-->
<div class="a" style="left:538px;top:47px;width:170px;height:302px;background:#fff;border-radius:4px;overflow:hidden">
</div>
<svg class="a" style="left:538px;top:61px" width="156" height="288" viewBox="0 0 156 288"><text x="-114" y="-75" transform="rotate(-42 -114 -75)" font-size="14.5" font-weight="bold" fill="#ededed" stroke="#f0f0f0" stroke-width="0.6" font-family="Liberation Sans">RationalDMIS</text><text x="-74" y="-75" transform="rotate(-42 -74 -75)" font-size="14.5" font-weight="bold" fill="#ededed" stroke="#f0f0f0" stroke-width="0.6" font-family="Liberation Sans">RationalDMIS</text><text x="-34" y="-75" transform="rotate(-42 -34 -75)" font-size="14.5" font-weight="bold" fill="#ededed" stroke="#f0f0f0" stroke-width="0.6" font-family="Liberation Sans">RationalDMIS</text><text x="6" y="-75" transform="rotate(-42 6 -75)" font-size="14.5" font-weight="bold" fill="#ededed" stroke="#f0f0f0" stroke-width="0.6" font-family="Liberation Sans">RationalDMIS</text><text x="46" y="-75" transform="rotate(-42 46 -75)" font-size="14.5" font-weight="bold" fill="#ededed" stroke="#f0f0f0" stroke-width="0.6" font-family="Liberation Sans">RationalDMIS</text><text x="86" y="-75" transform="rotate(-42 86 -75)" font-size="14.5" font-weight="bold" fill="#ededed" stroke="#f0f0f0" stroke-width="0.6" font-family="Liberation Sans">RationalDMIS</text><text x="126" y="-75" transform="rotate(-42 126 -75)" font-size="14.5" font-weight="bold" fill="#ededed" stroke="#f0f0f0" stroke-width="0.6" font-family="Liberation Sans">RationalDMIS</text><text x="166" y="-75" transform="rotate(-42 166 -75)" font-size="14.5" font-weight="bold" fill="#ededed" stroke="#f0f0f0" stroke-width="0.6" font-family="Liberation Sans">RationalDMIS</text><text x="206" y="-75" transform="rotate(-42 206 -75)" font-size="14.5" font-weight="bold" fill="#ededed" stroke="#f0f0f0" stroke-width="0.6" font-family="Liberation Sans">RationalDMIS</text><text x="-114" y="-8" transform="rotate(-42 -114 -8)" font-size="14.5" font-weight="bold" fill="#ededed" stroke="#f0f0f0" stroke-width="0.6" font-family="Liberation Sans">RationalDMIS</text><text x="-74" y="-8" transform="rotate(-42 -74 -8)" font-size="14.5" font-weight="bold" fill="#ededed" stroke="#f0f0f0" stroke-width="0.6" font-family="Liberation Sans">RationalDMIS</text><text x="-34" y="-8" transform="rotate(-42 -34 -8)" font-size="14.5" font-weight="bold" fill="#ededed" stroke="#f0f0f0" stroke-width="0.6" font-family="Liberation Sans">RationalDMIS</text><text x="6" y="-8" transform="rotate(-42 6 -8)" font-size="14.5" font-weight="bold" fill="#ededed" stroke="#f0f0f0" stroke-width="0.6" font-family="Liberation Sans">RationalDMIS</text><text x="46" y="-8" transform="rotate(-42 46 -8)" font-size="14.5" font-weight="bold" fill="#ededed" stroke="#f0f0f0" stroke-width="0.6" font-family="Liberation Sans">RationalDMIS</text><text x="86" y="-8" transform="rotate(-42 86 -8)" font-size="14.5" font-weight="bold" fill="#ededed" stroke="#f0f0f0" stroke-width="0.6" font-family="Liberation Sans">RationalDMIS</text><text x="126" y="-8" transform="rotate(-42 126 -8)" font-size="14.5" font-weight="bold" fill="#ededed" stroke="#f0f0f0" stroke-width="0.6" font-family="Liberation Sans">RationalDMIS</text><text x="166" y="-8" transform="rotate(-42 166 -8)" font-size="14.5" font-weight="bold" fill="#ededed" stroke="#f0f0f0" stroke-width="0.6" font-family="Liberation Sans">RationalDMIS</text><text x="206" y="-8" transform="rotate(-42 206 -8)" font-size="14.5" font-weight="bold" fill="#ededed" stroke="#f0f0f0" stroke-width="0.6" font-family="Liberation Sans">RationalDMIS</text><text x="-114" y="59" transform="rotate(-42 -114 59)" font-size="14.5" font-weight="bold" fill="#ededed" stroke="#f0f0f0" stroke-width="0.6" font-family="Liberation Sans">RationalDMIS</text><text x="-74" y="59" transform="rotate(-42 -74 59)" font-size="14.5" font-weight="bold" fill="#ededed" stroke="#f0f0f0" stroke-width="0.6" font-family="Liberation Sans">RationalDMIS</text><text x="-34" y="59" transform="rotate(-42 -34 59)" font-size="14.5" font-weight="bold" fill="#ededed" stroke="#f0f0f0" stroke-width="0.6" font-family="Liberation Sans">RationalDMIS</text><text x="6" y="59" transform="rotate(-42 6 59)" font-size="14.5" font-weight="bold" fill="#ededed" stroke="#f0f0f0" stroke-width="0.6" font-family="Liberation Sans">RationalDMIS</text><text x="46" y="59" transform="rotate(-42 46 59)" font-size="14.5" font-weight="bold" fill="#ededed" stroke="#f0f0f0" stroke-width="0.6" font-family="Liberation Sans">RationalDMIS</text><text x="86" y="59" transform="rotate(-42 86 59)" font-size="14.5" font-weight="bold" fill="#ededed" stroke="#f0f0f0" stroke-width="0.6" font-family="Liberation Sans">RationalDMIS</text><text x="126" y="59" transform="rotate(-42 126 59)" font-size="14.5" font-weight="bold" fill="#ededed" stroke="#f0f0f0" stroke-width="0.6" font-family="Liberation Sans">RationalDMIS</text><text x="166" y="59" transform="rotate(-42 166 59)" font-size="14.5" font-weight="bold" fill="#ededed" stroke="#f0f0f0" stroke-width="0.6" font-family="Liberation Sans">RationalDMIS</text><text x="206" y="59" transform="rotate(-42 206 59)" font-size="14.5" font-weight="bold" fill="#ededed" stroke="#f0f0f0" stroke-width="0.6" font-family="Liberation Sans">RationalDMIS</text><text x="-114" y="126" transform="rotate(-42 -114 126)" font-size="14.5" font-weight="bold" fill="#ededed" stroke="#f0f0f0" stroke-width="0.6" font-family="Liberation Sans">RationalDMIS</text><text x="-74" y="126" transform="rotate(-42 -74 126)" font-size="14.5" font-weight="bold" fill="#ededed" stroke="#f0f0f0" stroke-width="0.6" font-family="Liberation Sans">RationalDMIS</text><text x="-34" y="126" transform="rotate(-42 -34 126)" font-size="14.5" font-weight="bold" fill="#ededed" stroke="#f0f0f0" stroke-width="0.6" font-family="Liberation Sans">RationalDMIS</text><text x="6" y="126" transform="rotate(-42 6 126)" font-size="14.5" font-weight="bold" fill="#ededed" stroke="#f0f0f0" stroke-width="0.6" font-family="Liberation Sans">RationalDMIS</text><text x="46" y="126" transform="rotate(-42 46 126)" font-size="14.5" font-weight="bold" fill="#ededed" stroke="#f0f0f0" stroke-width="0.6" font-family="Liberation Sans">RationalDMIS</text><text x="86" y="126" transform="rotate(-42 86 126)" font-size="14.5" font-weight="bold" fill="#ededed" stroke="#f0f0f0" stroke-width="0.6" font-family="Liberation Sans">RationalDMIS</text><text x="126" y="126" transform="rotate(-42 126 126)" font-size="14.5" font-weight="bold" fill="#ededed" stroke="#f0f0f0" stroke-width="0.6" font-family="Liberation Sans">RationalDMIS</text><text x="166" y="126" transform="rotate(-42 166 126)" font-size="14.5" font-weight="bold" fill="#ededed" stroke="#f0f0f0" stroke-width="0.6" font-family="Liberation Sans">RationalDMIS</text><text x="206" y="126" transform="rotate(-42 206 126)" font-size="14.5" font-weight="bold" fill="#ededed" stroke="#f0f0f0" stroke-width="0.6" font-family="Liberation Sans">RationalDMIS</text><text x="-114" y="193" transform="rotate(-42 -114 193)" font-size="14.5" font-weight="bold" fill="#ededed" stroke="#f0f0f0" stroke-width="0.6" font-family="Liberation Sans">RationalDMIS</text><text x="-74" y="193" transform="rotate(-42 -74 193)" font-size="14.5" font-weight="bold" fill="#ededed" stroke="#f0f0f0" stroke-width="0.6" font-family="Liberation Sans">RationalDMIS</text><text x="-34" y="193" transform="rotate(-42 -34 193)" font-size="14.5" font-weight="bold" fill="#ededed" stroke="#f0f0f0" stroke-width="0.6" font-family="Liberation Sans">RationalDMIS</text><text x="6" y="193" transform="rotate(-42 6 193)" font-size="14.5" font-weight="bold" fill="#ededed" stroke="#f0f0f0" stroke-width="0.6" font-family="Liberation Sans">RationalDMIS</text><text x="46" y="193" transform="rotate(-42 46 193)" font-size="14.5" font-weight="bold" fill="#ededed" stroke="#f0f0f0" stroke-width="0.6" font-family="Liberation Sans">RationalDMIS</text><text x="86" y="193" transform="rotate(-42 86 193)" font-size="14.5" font-weight="bold" fill="#ededed" stroke="#f0f0f0" stroke-width="0.6" font-family="Liberation Sans">RationalDMIS</text><text x="126" y="193" transform="rotate(-42 126 193)" font-size="14.5" font-weight="bold" fill="#ededed" stroke="#f0f0f0" stroke-width="0.6" font-family="Liberation Sans">RationalDMIS</text><text x="166" y="193" transform="rotate(-42 166 193)" font-size="14.5" font-weight="bold" fill="#ededed" stroke="#f0f0f0" stroke-width="0.6" font-family="Liberation Sans">RationalDMIS</text><text x="206" y="193" transform="rotate(-42 206 193)" font-size="14.5" font-weight="bold" fill="#ededed" stroke="#f0f0f0" stroke-width="0.6" font-family="Liberation Sans">RationalDMIS</text><text x="-114" y="260" transform="rotate(-42 -114 260)" font-size="14.5" font-weight="bold" fill="#ededed" stroke="#f0f0f0" stroke-width="0.6" font-family="Liberation Sans">RationalDMIS</text><text x="-74" y="260" transform="rotate(-42 -74 260)" font-size="14.5" font-weight="bold" fill="#ededed" stroke="#f0f0f0" stroke-width="0.6" font-family="Liberation Sans">RationalDMIS</text><text x="-34" y="260" transform="rotate(-42 -34 260)" font-size="14.5" font-weight="bold" fill="#ededed" stroke="#f0f0f0" stroke-width="0.6" font-family="Liberation Sans">RationalDMIS</text><text x="6" y="260" transform="rotate(-42 6 260)" font-size="14.5" font-weight="bold" fill="#ededed" stroke="#f0f0f0" stroke-width="0.6" font-family="Liberation Sans">RationalDMIS</text><text x="46" y="260" transform="rotate(-42 46 260)" font-size="14.5" font-weight="bold" fill="#ededed" stroke="#f0f0f0" stroke-width="0.6" font-family="Liberation Sans">RationalDMIS</text><text x="86" y="260" transform="rotate(-42 86 260)" font-size="14.5" font-weight="bold" fill="#ededed" stroke="#f0f0f0" stroke-width="0.6" font-family="Liberation Sans">RationalDMIS</text><text x="126" y="260" transform="rotate(-42 126 260)" font-size="14.5" font-weight="bold" fill="#ededed" stroke="#f0f0f0" stroke-width="0.6" font-family="Liberation Sans">RationalDMIS</text><text x="166" y="260" transform="rotate(-42 166 260)" font-size="14.5" font-weight="bold" fill="#ededed" stroke="#f0f0f0" stroke-width="0.6" font-family="Liberation Sans">RationalDMIS</text><text x="206" y="260" transform="rotate(-42 206 260)" font-size="14.5" font-weight="bold" fill="#ededed" stroke="#f0f0f0" stroke-width="0.6" font-family="Liberation Sans">RationalDMIS</text><text x="-114" y="327" transform="rotate(-42 -114 327)" font-size="14.5" font-weight="bold" fill="#ededed" stroke="#f0f0f0" stroke-width="0.6" font-family="Liberation Sans">RationalDMIS</text><text x="-74" y="327" transform="rotate(-42 -74 327)" font-size="14.5" font-weight="bold" fill="#ededed" stroke="#f0f0f0" stroke-width="0.6" font-family="Liberation Sans">RationalDMIS</text><text x="-34" y="327" transform="rotate(-42 -34 327)" font-size="14.5" font-weight="bold" fill="#ededed" stroke="#f0f0f0" stroke-width="0.6" font-family="Liberation Sans">RationalDMIS</text><text x="6" y="327" transform="rotate(-42 6 327)" font-size="14.5" font-weight="bold" fill="#ededed" stroke="#f0f0f0" stroke-width="0.6" font-family="Liberation Sans">RationalDMIS</text><text x="46" y="327" transform="rotate(-42 46 327)" font-size="14.5" font-weight="bold" fill="#ededed" stroke="#f0f0f0" stroke-width="0.6" font-family="Liberation Sans">RationalDMIS</text><text x="86" y="327" transform="rotate(-42 86 327)" font-size="14.5" font-weight="bold" fill="#ededed" stroke="#f0f0f0" stroke-width="0.6" font-family="Liberation Sans">RationalDMIS</text><text x="126" y="327" transform="rotate(-42 126 327)" font-size="14.5" font-weight="bold" fill="#ededed" stroke="#f0f0f0" stroke-width="0.6" font-family="Liberation Sans">RationalDMIS</text><text x="166" y="327" transform="rotate(-42 166 327)" font-size="14.5" font-weight="bold" fill="#ededed" stroke="#f0f0f0" stroke-width="0.6" font-family="Liberation Sans">RationalDMIS</text><text x="206" y="327" transform="rotate(-42 206 327)" font-size="14.5" font-weight="bold" fill="#ededed" stroke="#f0f0f0" stroke-width="0.6" font-family="Liberation Sans">RationalDMIS</text><text x="-114" y="394" transform="rotate(-42 -114 394)" font-size="14.5" font-weight="bold" fill="#ededed" stroke="#f0f0f0" stroke-width="0.6" font-family="Liberation Sans">RationalDMIS</text><text x="-74" y="394" transform="rotate(-42 -74 394)" font-size="14.5" font-weight="bold" fill="#ededed" stroke="#f0f0f0" stroke-width="0.6" font-family="Liberation Sans">RationalDMIS</text><text x="-34" y="394" transform="rotate(-42 -34 394)" font-size="14.5" font-weight="bold" fill="#ededed" stroke="#f0f0f0" stroke-width="0.6" font-family="Liberation Sans">RationalDMIS</text><text x="6" y="394" transform="rotate(-42 6 394)" font-size="14.5" font-weight="bold" fill="#ededed" stroke="#f0f0f0" stroke-width="0.6" font-family="Liberation Sans">RationalDMIS</text><text x="46" y="394" transform="rotate(-42 46 394)" font-size="14.5" font-weight="bold" fill="#ededed" stroke="#f0f0f0" stroke-width="0.6" font-family="Liberation Sans">RationalDMIS</text><text x="86" y="394" transform="rotate(-42 86 394)" font-size="14.5" font-weight="bold" fill="#ededed" stroke="#f0f0f0" stroke-width="0.6" font-family="Liberation Sans">RationalDMIS</text><text x="126" y="394" transform="rotate(-42 126 394)" font-size="14.5" font-weight="bold" fill="#ededed" stroke="#f0f0f0" stroke-width="0.6" font-family="Liberation Sans">RationalDMIS</text><text x="166" y="394" transform="rotate(-42 166 394)" font-size="14.5" font-weight="bold" fill="#ededed" stroke="#f0f0f0" stroke-width="0.6" font-family="Liberation Sans">RationalDMIS</text><text x="206" y="394" transform="rotate(-42 206 394)" font-size="14.5" font-weight="bold" fill="#ededed" stroke="#f0f0f0" stroke-width="0.6" font-family="Liberation Sans">RationalDMIS</text><text x="-114" y="461" transform="rotate(-42 -114 461)" font-size="14.5" font-weight="bold" fill="#ededed" stroke="#f0f0f0" stroke-width="0.6" font-family="Liberation Sans">RationalDMIS</text><text x="-74" y="461" transform="rotate(-42 -74 461)" font-size="14.5" font-weight="bold" fill="#ededed" stroke="#f0f0f0" stroke-width="0.6" font-family="Liberation Sans">RationalDMIS</text><text x="-34" y="461" transform="rotate(-42 -34 461)" font-size="14.5" font-weight="bold" fill="#ededed" stroke="#f0f0f0" stroke-width="0.6" font-family="Liberation Sans">RationalDMIS</text><text x="6" y="461" transform="rotate(-42 6 461)" font-size="14.5" font-weight="bold" fill="#ededed" stroke="#f0f0f0" stroke-width="0.6" font-family="Liberation Sans">RationalDMIS</text><text x="46" y="461" transform="rotate(-42 46 461)" font-size="14.5" font-weight="bold" fill="#ededed" stroke="#f0f0f0" stroke-width="0.6" font-family="Liberation Sans">RationalDMIS</text><text x="86" y="461" transform="rotate(-42 86 461)" font-size="14.5" font-weight="bold" fill="#ededed" stroke="#f0f0f0" stroke-width="0.6" font-family="Liberation Sans">RationalDMIS</text><text x="126" y="461" transform="rotate(-42 126 461)" font-size="14.5" font-weight="bold" fill="#ededed" stroke="#f0f0f0" stroke-width="0.6" font-family="Liberation Sans">RationalDMIS</text><text x="166" y="461" transform="rotate(-42 166 461)" font-size="14.5" font-weight="bold" fill="#ededed" stroke="#f0f0f0" stroke-width="0.6" font-family="Liberation Sans">RationalDMIS</text><text x="206" y="461" transform="rotate(-42 206 461)" font-size="14.5" font-weight="bold" fill="#ededed" stroke="#f0f0f0" stroke-width="0.6" font-family="Liberation Sans">RationalDMIS</text></svg>
<div class="a" style="left:538px;top:47px;width:158px;height:12px;background:linear-gradient(#f6f6f6,#e8e8e8)"></div>
<div class="a" style="left:615px;top:48px;width:1px;height:11px;background:#d8d8d8"></div>
<div class="a" style="left:538px;top:59px;width:158px;height:2px;background:#f2d898"></div>
<div class="a hd" style="left:538px;width:77px;text-align:center"><span class="cj">理论</span></div>
<div class="a hd" style="left:616px;width:79px;text-align:center"><span class="cj">实际</span></div>
<div class="a" style="left:615px;top:61px;width:1px;height:288px;background:#f0f0f0"></div>
<div class="a" style="left:694px;top:47px;width:13px;height:302px;background:#f0f0f0"></div>
<div class="a" style="left:696px;top:48px;width:10px;height:11px;border:1px solid #b8dcea;background:linear-gradient(#f4f8fa,#e0ecf0)"></div>
<svg class="a" style="left:697px;top:51px" width="8" height="5" viewBox="0 0 8 5"><path d="M0 5H8L4 0Z" fill="#0a2040"/></svg>
<div class="a" style="left:695px;top:178px;width:11px;height:158px;border:1px solid #b0d8e8;background:#e6eef2"></div>
<div class="a" style="left:696px;top:337px;width:10px;height:11px;border:1px solid #b8dcea;background:linear-gradient(#f4f8fa,#e0ecf0)"></div>
<svg class="a" style="left:697px;top:340px" width="8" height="5" viewBox="0 0 8 5"><path d="M0 0H8L4 5Z" fill="#0a2040"/></svg>
<div class="a" style="left:538px;top:195px;width:156px;height:24px;background:#fddc9c"></div>
<div class="a" style="left:615px;top:195px;width:1px;height:24px;background:#fff0d8"></div>
<div class="a" style="left:544px;top:61px;width:1px;height:274px;background:#bcbcbc"></div>
<div class="a" style="left:557px;top:183px;width:1px;height:31px;background:#bcbcbc"></div>
<div class="a" style="left:557px;top:304px;width:1px;height:7px;background:#bcbcbc"></div>
<div class="a" style="left:545px;top:68px;width:6px;height:1px;background:#bcbcbc"></div>
<svg class="a" style="left:551px;top:63px" width="10" height="10" viewBox="0 0 10 10"><circle cx="5" cy="5" r="4" fill="none" stroke="#5a78c0" stroke-width="2"/><circle cx="5" cy="5" r="4.6" fill="none" stroke="#8aa0d8" stroke-width="0.6"/></svg>
<div class="a tr" style="left:563px;top:62px;color:#111"><span class="cj">圆</span></div>
<div class="a" style="left:545px;top:80px;width:6px;height:1px;background:#bcbcbc"></div>
<svg class="a" style="left:551px;top:75px" width="10" height="10" viewBox="0 0 10 10"><path d="M0.5 4 Q5 0 9.5 4 L5 9Z" fill="#d8e0f6" stroke="#5a78c0" stroke-width="1.3"/><path d="M2.5 5 Q5 3 7.5 5" stroke="#5a78c0" fill="none" stroke-width="1"/></svg>
<div class="a tr" style="left:563px;top:74px;color:#111"><span class="cj">圆弧</span></div>
<div class="a" style="left:545px;top:92px;width:6px;height:1px;background:#bcbcbc"></div>
<svg class="a" style="left:551px;top:87px" width="10" height="10" viewBox="0 0 10 10"><circle cx="5" cy="5" r="4.5" fill="#3a5ab0"/><circle cx="4" cy="4" r="2.8" fill="#e0e8fc"/></svg>
<div class="a tr" style="left:563px;top:86px;color:#111"><span class="cj">球</span></div>
<div class="a" style="left:545px;top:104px;width:6px;height:1px;background:#bcbcbc"></div>
<svg class="a" style="left:551px;top:99px" width="10" height="10" viewBox="0 0 10 10"><path d="M1.5 2 V8.5 Q5 10.5 8.5 8.5 V2Z" fill="#d8e0f6" stroke="#5a78c0" stroke-width="1.1"/><ellipse cx="5" cy="2" rx="3.5" ry="1.5" fill="#e8eefc" stroke="#5a78c0" stroke-width="1"/><rect x="5.5" y="3" width="2" height="5.5" fill="#6a88c8"/></svg>
<div class="a tr" style="left:563px;top:98px;color:#111"><span class="cj">圆柱</span></div>
<div class="a" style="left:545px;top:116px;width:6px;height:1px;background:#bcbcbc"></div>
<svg class="a" style="left:551px;top:111px" width="10" height="10" viewBox="0 0 10 10"><path d="M5 0.5 L9 8 Q5 10.5 1 8Z" fill="#b8c8f0" stroke="#5a78c0" stroke-width="1"/><path d="M5 1 L7 8.5" stroke="#6a88c8" stroke-width="1.4"/></svg>
<div class="a tr" style="left:563px;top:110px;color:#111"><span class="cj">圆锥</span></div>
<div class="a" style="left:545px;top:128px;width:6px;height:1px;background:#bcbcbc"></div>
<svg class="a" style="left:551px;top:123px" width="10" height="10" viewBox="0 0 10 10"><ellipse cx="5" cy="5" rx="4.5" ry="3.4" fill="none" stroke="#5a78c0" stroke-width="1.8"/><ellipse cx="5" cy="5" rx="2.5" ry="1.4" fill="#e8eefc"/></svg>
<div class="a tr" style="left:563px;top:122px;color:#111"><span class="cj">椭圆</span></div>
<div class="a" style="left:545px;top:141px;width:6px;height:1px;background:#bcbcbc"></div>
<svg class="a" style="left:551px;top:136px" width="10" height="10" viewBox="0 0 10 10"><rect x="0.7" y="1.7" width="8.6" height="6.6" rx="3.3" fill="#a8b8e8" stroke="#5a78c0" stroke-width="1.2"/><rect x="2.7" y="3.7" width="4.6" height="2.6" rx="1.3" fill="#f0f4ff"/></svg>
<div class="a tr" style="left:563px;top:135px;color:#111"><span class="cj">键槽</span></div>
<div class="a" style="left:545px;top:153px;width:6px;height:1px;background:#bcbcbc"></div>
<svg class="a" style="left:551px;top:148px" width="10" height="10" viewBox="0 0 10 10"><path d="M0.5 3 L6 2 V8 L0.5 9Z" fill="#a8c0e8" stroke="#5a78c0" stroke-width="0.9"/><path d="M3.5 1.5 L9.5 0.5 V6.5 L3.5 7.5Z" fill="#d0dcf4" stroke="#5a78c0" stroke-width="0.9"/></svg>
<div class="a tr" style="left:563px;top:147px;color:#111"><span class="cj">平行平面</span></div>
<div class="a" style="left:545px;top:165px;width:6px;height:1px;background:#bcbcbc"></div>
<svg class="a" style="left:551px;top:160px" width="10" height="10" viewBox="0 0 10 10"><circle cx="5" cy="5" r="4" fill="#dfe6fa" stroke="#5a78c0" stroke-width="1.6"/><circle cx="5" cy="5" r="1.6" fill="#5a78c0"/></svg>
<div class="a tr" style="left:563px;top:159px;color:#111"><span class="cj">圆环</span></div>
<div class="a" style="left:541px;top:174px;width:7px;height:7px;border:1px solid #a8a8a8;background:#fff"></div><div class="a" style="left:542.5px;top:177px;width:4px;height:1px;background:#222"></div>
<svg class="a" style="left:551px;top:172px" width="10" height="10" viewBox="0 0 10 10"><path d="M1 9 Q1 5 4 5 Q7 5 6 2 Q6 0.5 9 1" fill="none" stroke="#3a58b0" stroke-width="2.2" stroke-linecap="round"/></svg>
<div class="a tr" style="left:563px;top:171px;color:#6a6ac0"><span class="cj">曲线</span></div>
<div class="a" style="left:557px;top:189px;width:6px;height:1px;background:#bcbcbc"></div>
<div class="a tr" style="left:564px;top:183px;color:#1a1a2a">GCV_INTER1</div>
<div class="a" style="left:557px;top:201px;width:6px;height:1px;background:#bcbcbc"></div>
<div class="a tr" style="left:564px;top:195px;color:#9a9080">GCV_1</div>
<div class="a tr" style="left:618px;top:195px;color:#9a9080">GCV_1</div>
<div class="a" style="left:557px;top:213px;width:6px;height:1px;background:#bcbcbc"></div>
<div class="a tr" style="left:564px;top:207px;color:#9a9080">GCV_2</div>
<div class="a tr" style="left:618px;top:207px;color:#9a9080">GCV_2</div>
<div class="a" style="left:545px;top:225px;width:6px;height:1px;background:#bcbcbc"></div>
<svg class="a" style="left:551px;top:220px" width="10" height="10" viewBox="0 0 10 10"><path d="M0.5 5 L5 0.5 L9.5 4 L5 9.5Z" fill="#b8ccf4" stroke="#5a78c0" stroke-width="1.2"/><path d="M3 5 L5.5 2.5 L7 4" stroke="#fff" stroke-width="1" fill="none"/></svg>
<div class="a tr" style="left:563px;top:219px;color:#111"><span class="cj">曲面</span></div>
<div class="a" style="left:545px;top:238px;width:6px;height:1px;background:#bcbcbc"></div>
<svg class="a" style="left:551px;top:233px" width="10" height="10" viewBox="0 0 10 10"><path d="M5 0.5 L9 2.8 V7.2 L5 9.5 L1 7.2 V2.8Z" fill="none" stroke="#6a80c0" stroke-width="1.6"/></svg>
<div class="a tr" style="left:563px;top:232px;color:#111"><span class="cj">正多边形</span></div>
<div class="a" style="left:545px;top:250px;width:6px;height:1px;background:#bcbcbc"></div>
<svg class="a" style="left:551px;top:245px" width="10" height="10" viewBox="0 0 10 10"><path d="M2 4 L7 2 L8.5 8 L3 9.5Z" fill="#c8d8f4" stroke="#5a78c0" stroke-width="0.9"/><circle cx="8" cy="1" r="0.8" fill="#5a78c0"/><circle cx="1" cy="3" r="0.8" fill="#5a78c0"/><circle cx="5" cy="0.8" r="0.7" fill="#5a78c0"/></svg>
<div class="a tr" style="left:563px;top:244px;color:#111"><span class="cj">组合</span></div>
<div class="a" style="left:545px;top:262px;width:6px;height:1px;background:#bcbcbc"></div>
<svg class="a" style="left:551px;top:257px" width="10" height="10" viewBox="0 0 10 10"><ellipse cx="5" cy="5.5" rx="4.5" ry="3.5" fill="#5a78c8"/><ellipse cx="4.8" cy="4.5" rx="3.8" ry="2.6" fill="#e4ecfc"/><circle cx="4" cy="4.5" r="1" fill="#3a58b0"/></svg>
<div class="a tr" style="left:563px;top:256px;color:#111"><span class="cj">凸轮轴</span></div>
<div class="a" style="left:545px;top:274px;width:6px;height:1px;background:#bcbcbc"></div>
<svg class="a" style="left:551px;top:269px" width="10" height="10" viewBox="0 0 10 10"><circle cx="5" cy="5" r="4.5" fill="#5a78c8"/><circle cx="5" cy="4.5" r="3" fill="#c8d4f4"/><circle cx="5" cy="4.5" r="1" fill="#3a58b0"/></svg>
<div class="a tr" style="left:563px;top:268px;color:#111"><span class="cj">齿轮</span></div>
<div class="a" style="left:545px;top:286px;width:6px;height:1px;background:#bcbcbc"></div>
<svg class="a" style="left:551px;top:281px" width="10" height="10" viewBox="0 0 10 10"><path d="M1 3 Q4 0.5 6 3 L9 7" fill="none" stroke="#3a58b0" stroke-width="2.6" stroke-linecap="round"/><path d="M1.5 2.5 Q4 1 5.5 3" fill="none" stroke="#b8d0f8" stroke-width="0.9"/></svg>
<div class="a tr" style="left:563px;top:280px;color:#111"><span class="cj">管道</span></div>
<div class="a" style="left:541px;top:295px;width:7px;height:7px;border:1px solid #a8a8a8;background:#fff"></div><div class="a" style="left:542.5px;top:298px;width:4px;height:1px;background:#222"></div>
<div class="a" style="left:550px;top:292px;font-size:9px;font-weight:bold;color:#3050a8;line-height:12px;transform:scaleX(0.55);transform-origin:0 0">CAD</div>
<div class="a tr" style="left:563px;top:292px;color:#111">CAD<span class="cj">模型</span></div>
<div class="a" style="left:557px;top:310px;width:6px;height:1px;background:#bcbcbc"></div>
<div class="a tr" style="left:564px;top:304px;color:#7078b8">CADM_1</div>
<div class="a tr" style="left:618px;top:304px;color:#7078b8">RD.IGS</div>
<div class="a" style="left:545px;top:322px;width:6px;height:1px;background:#bcbcbc"></div>
<svg class="a" style="left:551px;top:317px" width="10" height="10" viewBox="0 0 10 10"><g fill="#3a58b0"><circle cx="2" cy="8" r="0.9"/><circle cx="4" cy="5" r="0.9"/><circle cx="7" cy="3" r="0.9"/><circle cx="8.5" cy="6" r="0.9"/><circle cx="5" cy="8.5" r="0.9"/><circle cx="3" cy="2" r="0.7"/><circle cx="6" cy="6" r="0.7"/></g></svg>
<div class="a tr" style="left:563px;top:316px;color:#111"><span class="cj">点云</span></div>
<div class="a" style="left:545px;top:335px;width:6px;height:1px;background:#bcbcbc"></div>
<svg class="a" style="left:551px;top:330px" width="10" height="10" viewBox="0 0 10 10"><g fill="#3a58b0"><circle cx="2" cy="8" r="0.9"/><circle cx="4" cy="5" r="0.9"/><circle cx="7" cy="3" r="0.9"/><circle cx="8.5" cy="6" r="0.9"/><circle cx="5" cy="8.5" r="0.9"/><circle cx="3" cy="2" r="0.7"/><circle cx="6" cy="6" r="0.7"/></g></svg>
<div class="a tr" style="left:563px;top:329px;color:#111"><span class="cj">选中的点云</span></div>
<svg class="a" style="left:712px;top:61px" width="201" height="276" viewBox="0 0 201 276"><text x="-114" y="-75" transform="rotate(-42 -114 -75)" font-size="14.5" font-weight="bold" fill="#ededed" stroke="#f0f0f0" stroke-width="0.6" font-family="Liberation Sans">RationalDMIS</text><text x="-74" y="-75" transform="rotate(-42 -74 -75)" font-size="14.5" font-weight="bold" fill="#ededed" stroke="#f0f0f0" stroke-width="0.6" font-family="Liberation Sans">RationalDMIS</text><text x="-34" y="-75" transform="rotate(-42 -34 -75)" font-size="14.5" font-weight="bold" fill="#ededed" stroke="#f0f0f0" stroke-width="0.6" font-family="Liberation Sans">RationalDMIS</text><text x="6" y="-75" transform="rotate(-42 6 -75)" font-size="14.5" font-weight="bold" fill="#ededed" stroke="#f0f0f0" stroke-width="0.6" font-family="Liberation Sans">RationalDMIS</text><text x="46" y="-75" transform="rotate(-42 46 -75)" font-size="14.5" font-weight="bold" fill="#ededed" stroke="#f0f0f0" stroke-width="0.6" font-family="Liberation Sans">RationalDMIS</text><text x="86" y="-75" transform="rotate(-42 86 -75)" font-size="14.5" font-weight="bold" fill="#ededed" stroke="#f0f0f0" stroke-width="0.6" font-family="Liberation Sans">RationalDMIS</text><text x="126" y="-75" transform="rotate(-42 126 -75)" font-size="14.5" font-weight="bold" fill="#ededed" stroke="#f0f0f0" stroke-width="0.6" font-family="Liberation Sans">RationalDMIS</text><text x="166" y="-75" transform="rotate(-42 166 -75)" font-size="14.5" font-weight="bold" fill="#ededed" stroke="#f0f0f0" stroke-width="0.6" font-family="Liberation Sans">RationalDMIS</text><text x="206" y="-75" transform="rotate(-42 206 -75)" font-size="14.5" font-weight="bold" fill="#ededed" stroke="#f0f0f0" stroke-width="0.6" font-family="Liberation Sans">RationalDMIS</text><text x="246" y="-75" transform="rotate(-42 246 -75)" font-size="14.5" font-weight="bold" fill="#ededed" stroke="#f0f0f0" stroke-width="0.6" font-family="Liberation Sans">RationalDMIS</text><text x="286" y="-75" transform="rotate(-42 286 -75)" font-size="14.5" font-weight="bold" fill="#ededed" stroke="#f0f0f0" stroke-width="0.6" font-family="Liberation Sans">RationalDMIS</text><text x="-114" y="-8" transform="rotate(-42 -114 -8)" font-size="14.5" font-weight="bold" fill="#ededed" stroke="#f0f0f0" stroke-width="0.6" font-family="Liberation Sans">RationalDMIS</text><text x="-74" y="-8" transform="rotate(-42 -74 -8)" font-size="14.5" font-weight="bold" fill="#ededed" stroke="#f0f0f0" stroke-width="0.6" font-family="Liberation Sans">RationalDMIS</text><text x="-34" y="-8" transform="rotate(-42 -34 -8)" font-size="14.5" font-weight="bold" fill="#ededed" stroke="#f0f0f0" stroke-width="0.6" font-family="Liberation Sans">RationalDMIS</text><text x="6" y="-8" transform="rotate(-42 6 -8)" font-size="14.5" font-weight="bold" fill="#ededed" stroke="#f0f0f0" stroke-width="0.6" font-family="Liberation Sans">RationalDMIS</text><text x="46" y="-8" transform="rotate(-42 46 -8)" font-size="14.5" font-weight="bold" fill="#ededed" stroke="#f0f0f0" stroke-width="0.6" font-family="Liberation Sans">RationalDMIS</text><text x="86" y="-8" transform="rotate(-42 86 -8)" font-size="14.5" font-weight="bold" fill="#ededed" stroke="#f0f0f0" stroke-width="0.6" font-family="Liberation Sans">RationalDMIS</text><text x="126" y="-8" transform="rotate(-42 126 -8)" font-size="14.5" font-weight="bold" fill="#ededed" stroke="#f0f0f0" stroke-width="0.6" font-family="Liberation Sans">RationalDMIS</text><text x="166" y="-8" transform="rotate(-42 166 -8)" font-size="14.5" font-weight="bold" fill="#ededed" stroke="#f0f0f0" stroke-width="0.6" font-family="Liberation Sans">RationalDMIS</text><text x="206" y="-8" transform="rotate(-42 206 -8)" font-size="14.5" font-weight="bold" fill="#ededed" stroke="#f0f0f0" stroke-width="0.6" font-family="Liberation Sans">RationalDMIS</text><text x="246" y="-8" transform="rotate(-42 246 -8)" font-size="14.5" font-weight="bold" fill="#ededed" stroke="#f0f0f0" stroke-width="0.6" font-family="Liberation Sans">RationalDMIS</text><text x="286" y="-8" transform="rotate(-42 286 -8)" font-size="14.5" font-weight="bold" fill="#ededed" stroke="#f0f0f0" stroke-width="0.6" font-family="Liberation Sans">RationalDMIS</text><text x="-114" y="59" transform="rotate(-42 -114 59)" font-size="14.5" font-weight="bold" fill="#ededed" stroke="#f0f0f0" stroke-width="0.6" font-family="Liberation Sans">RationalDMIS</text><text x="-74" y="59" transform="rotate(-42 -74 59)" font-size="14.5" font-weight="bold" fill="#ededed" stroke="#f0f0f0" stroke-width="0.6" font-family="Liberation Sans">RationalDMIS</text><text x="-34" y="59" transform="rotate(-42 -34 59)" font-size="14.5" font-weight="bold" fill="#ededed" stroke="#f0f0f0" stroke-width="0.6" font-family="Liberation Sans">RationalDMIS</text><text x="6" y="59" transform="rotate(-42 6 59)" font-size="14.5" font-weight="bold" fill="#ededed" stroke="#f0f0f0" stroke-width="0.6" font-family="Liberation Sans">RationalDMIS</text><text x="46" y="59" transform="rotate(-42 46 59)" font-size="14.5" font-weight="bold" fill="#ededed" stroke="#f0f0f0" stroke-width="0.6" font-family="Liberation Sans">RationalDMIS</text><text x="86" y="59" transform="rotate(-42 86 59)" font-size="14.5" font-weight="bold" fill="#ededed" stroke="#f0f0f0" stroke-width="0.6" font-family="Liberation Sans">RationalDMIS</text><text x="126" y="59" transform="rotate(-42 126 59)" font-size="14.5" font-weight="bold" fill="#ededed" stroke="#f0f0f0" stroke-width="0.6" font-family="Liberation Sans">RationalDMIS</text><text x="166" y="59" transform="rotate(-42 166 59)" font-size="14.5" font-weight="bold" fill="#ededed" stroke="#f0f0f0" stroke-width="0.6" font-family="Liberation Sans">RationalDMIS</text><text x="206" y="59" transform="rotate(-42 206 59)" font-size="14.5" font-weight="bold" fill="#ededed" stroke="#f0f0f0" stroke-width="0.6" font-family="Liberation Sans">RationalDMIS</text><text x="246" y="59" transform="rotate(-42 246 59)" font-size="14.5" font-weight="bold" fill="#ededed" stroke="#f0f0f0" stroke-width="0.6" font-family="Liberation Sans">RationalDMIS</text><text x="286" y="59" transform="rotate(-42 286 59)" font-size="14.5" font-weight="bold" fill="#ededed" stroke="#f0f0f0" stroke-width="0.6" font-family="Liberation Sans">RationalDMIS</text><text x="-114" y="126" transform="rotate(-42 -114 126)" font-size="14.5" font-weight="bold" fill="#ededed" stroke="#f0f0f0" stroke-width="0.6" font-family="Liberation Sans">RationalDMIS</text><text x="-74" y="126" transform="rotate(-42 -74 126)" font-size="14.5" font-weight="bold" fill="#ededed" stroke="#f0f0f0" stroke-width="0.6" font-family="Liberation Sans">RationalDMIS</text><text x="-34" y="126" transform="rotate(-42 -34 126)" font-size="14.5" font-weight="bold" fill="#ededed" stroke="#f0f0f0" stroke-width="0.6" font-family="Liberation Sans">RationalDMIS</text><text x="6" y="126" transform="rotate(-42 6 126)" font-size="14.5" font-weight="bold" fill="#ededed" stroke="#f0f0f0" stroke-width="0.6" font-family="Liberation Sans">RationalDMIS</text><text x="46" y="126" transform="rotate(-42 46 126)" font-size="14.5" font-weight="bold" fill="#ededed" stroke="#f0f0f0" stroke-width="0.6" font-family="Liberation Sans">RationalDMIS</text><text x="86" y="126" transform="rotate(-42 86 126)" font-size="14.5" font-weight="bold" fill="#ededed" stroke="#f0f0f0" stroke-width="0.6" font-family="Liberation Sans">RationalDMIS</text><text x="126" y="126" transform="rotate(-42 126 126)" font-size="14.5" font-weight="bold" fill="#ededed" stroke="#f0f0f0" stroke-width="0.6" font-family="Liberation Sans">RationalDMIS</text><text x="166" y="126" transform="rotate(-42 166 126)" font-size="14.5" font-weight="bold" fill="#ededed" stroke="#f0f0f0" stroke-width="0.6" font-family="Liberation Sans">RationalDMIS</text><text x="206" y="126" transform="rotate(-42 206 126)" font-size="14.5" font-weight="bold" fill="#ededed" stroke="#f0f0f0" stroke-width="0.6" font-family="Liberation Sans">RationalDMIS</text><text x="246" y="126" transform="rotate(-42 246 126)" font-size="14.5" font-weight="bold" fill="#ededed" stroke="#f0f0f0" stroke-width="0.6" font-family="Liberation Sans">RationalDMIS</text><text x="286" y="126" transform="rotate(-42 286 126)" font-size="14.5" font-weight="bold" fill="#ededed" stroke="#f0f0f0" stroke-width="0.6" font-family="Liberation Sans">RationalDMIS</text><text x="-114" y="193" transform="rotate(-42 -114 193)" font-size="14.5" font-weight="bold" fill="#ededed" stroke="#f0f0f0" stroke-width="0.6" font-family="Liberation Sans">RationalDMIS</text><text x="-74" y="193" transform="rotate(-42 -74 193)" font-size="14.5" font-weight="bold" fill="#ededed" stroke="#f0f0f0" stroke-width="0.6" font-family="Liberation Sans">RationalDMIS</text><text x="-34" y="193" transform="rotate(-42 -34 193)" font-size="14.5" font-weight="bold" fill="#ededed" stroke="#f0f0f0" stroke-width="0.6" font-family="Liberation Sans">RationalDMIS</text><text x="6" y="193" transform="rotate(-42 6 193)" font-size="14.5" font-weight="bold" fill="#ededed" stroke="#f0f0f0" stroke-width="0.6" font-family="Liberation Sans">RationalDMIS</text><text x="46" y="193" transform="rotate(-42 46 193)" font-size="14.5" font-weight="bold" fill="#ededed" stroke="#f0f0f0" stroke-width="0.6" font-family="Liberation Sans">RationalDMIS</text><text x="86" y="193" transform="rotate(-42 86 193)" font-size="14.5" font-weight="bold" fill="#ededed" stroke="#f0f0f0" stroke-width="0.6" font-family="Liberation Sans">RationalDMIS</text><text x="126" y="193" transform="rotate(-42 126 193)" font-size="14.5" font-weight="bold" fill="#ededed" stroke="#f0f0f0" stroke-width="0.6" font-family="Liberation Sans">RationalDMIS</text><text x="166" y="193" transform="rotate(-42 166 193)" font-size="14.5" font-weight="bold" fill="#ededed" stroke="#f0f0f0" stroke-width="0.6" font-family="Liberation Sans">RationalDMIS</text><text x="206" y="193" transform="rotate(-42 206 193)" font-size="14.5" font-weight="bold" fill="#ededed" stroke="#f0f0f0" stroke-width="0.6" font-family="Liberation Sans">RationalDMIS</text><text x="246" y="193" transform="rotate(-42 246 193)" font-size="14.5" font-weight="bold" fill="#ededed" stroke="#f0f0f0" stroke-width="0.6" font-family="Liberation Sans">RationalDMIS</text><text x="286" y="193" transform="rotate(-42 286 193)" font-size="14.5" font-weight="bold" fill="#ededed" stroke="#f0f0f0" stroke-width="0.6" font-family="Liberation Sans">RationalDMIS</text><text x="-114" y="260" transform="rotate(-42 -114 260)" font-size="14.5" font-weight="bold" fill="#ededed" stroke="#f0f0f0" stroke-width="0.6" font-family="Liberation Sans">RationalDMIS</text><text x="-74" y="260" transform="rotate(-42 -74 260)" font-size="14.5" font-weight="bold" fill="#ededed" stroke="#f0f0f0" stroke-width="0.6" font-family="Liberation Sans">RationalDMIS</text><text x="-34" y="260" transform="rotate(-42 -34 260)" font-size="14.5" font-weight="bold" fill="#ededed" stroke="#f0f0f0" stroke-width="0.6" font-family="Liberation Sans">RationalDMIS</text><text x="6" y="260" transform="rotate(-42 6 260)" font-size="14.5" font-weight="bold" fill="#ededed" stroke="#f0f0f0" stroke-width="0.6" font-family="Liberation Sans">RationalDMIS</text><text x="46" y="260" transform="rotate(-42 46 260)" font-size="14.5" font-weight="bold" fill="#ededed" stroke="#f0f0f0" stroke-width="0.6" font-family="Liberation Sans">RationalDMIS</text><text x="86" y="260" transform="rotate(-42 86 260)" font-size="14.5" font-weight="bold" fill="#ededed" stroke="#f0f0f0" stroke-width="0.6" font-family="Liberation Sans">RationalDMIS</text><text x="126" y="260" transform="rotate(-42 126 260)" font-size="14.5" font-weight="bold" fill="#ededed" stroke="#f0f0f0" stroke-width="0.6" font-family="Liberation Sans">RationalDMIS</text><text x="166" y="260" transform="rotate(-42 166 260)" font-size="14.5" font-weight="bold" fill="#ededed" stroke="#f0f0f0" stroke-width="0.6" font-family="Liberation Sans">RationalDMIS</text><text x="206" y="260" transform="rotate(-42 206 260)" font-size="14.5" font-weight="bold" fill="#ededed" stroke="#f0f0f0" stroke-width="0.6" font-family="Liberation Sans">RationalDMIS</text><text x="246" y="260" transform="rotate(-42 246 260)" font-size="14.5" font-weight="bold" fill="#ededed" stroke="#f0f0f0" stroke-width="0.6" font-family="Liberation Sans">RationalDMIS</text><text x="286" y="260" transform="rotate(-42 286 260)" font-size="14.5" font-weight="bold" fill="#ededed" stroke="#f0f0f0" stroke-width="0.6" font-family="Liberation Sans">RationalDMIS</text><text x="-114" y="327" transform="rotate(-42 -114 327)" font-size="14.5" font-weight="bold" fill="#ededed" stroke="#f0f0f0" stroke-width="0.6" font-family="Liberation Sans">RationalDMIS</text><text x="-74" y="327" transform="rotate(-42 -74 327)" font-size="14.5" font-weight="bold" fill="#ededed" stroke="#f0f0f0" stroke-width="0.6" font-family="Liberation Sans">RationalDMIS</text><text x="-34" y="327" transform="rotate(-42 -34 327)" font-size="14.5" font-weight="bold" fill="#ededed" stroke="#f0f0f0" stroke-width="0.6" font-family="Liberation Sans">RationalDMIS</text><text x="6" y="327" transform="rotate(-42 6 327)" font-size="14.5" font-weight="bold" fill="#ededed" stroke="#f0f0f0" stroke-width="0.6" font-family="Liberation Sans">RationalDMIS</text><text x="46" y="327" transform="rotate(-42 46 327)" font-size="14.5" font-weight="bold" fill="#ededed" stroke="#f0f0f0" stroke-width="0.6" font-family="Liberation Sans">RationalDMIS</text><text x="86" y="327" transform="rotate(-42 86 327)" font-size="14.5" font-weight="bold" fill="#ededed" stroke="#f0f0f0" stroke-width="0.6" font-family="Liberation Sans">RationalDMIS</text><text x="126" y="327" transform="rotate(-42 126 327)" font-size="14.5" font-weight="bold" fill="#ededed" stroke="#f0f0f0" stroke-width="0.6" font-family="Liberation Sans">RationalDMIS</text><text x="166" y="327" transform="rotate(-42 166 327)" font-size="14.5" font-weight="bold" fill="#ededed" stroke="#f0f0f0" stroke-width="0.6" font-family="Liberation Sans">RationalDMIS</text><text x="206" y="327" transform="rotate(-42 206 327)" font-size="14.5" font-weight="bold" fill="#ededed" stroke="#f0f0f0" stroke-width="0.6" font-family="Liberation Sans">RationalDMIS</text><text x="246" y="327" transform="rotate(-42 246 327)" font-size="14.5" font-weight="bold" fill="#ededed" stroke="#f0f0f0" stroke-width="0.6" font-family="Liberation Sans">RationalDMIS</text><text x="286" y="327" transform="rotate(-42 286 327)" font-size="14.5" font-weight="bold" fill="#ededed" stroke="#f0f0f0" stroke-width="0.6" font-family="Liberation Sans">RationalDMIS</text><text x="-114" y="394" transform="rotate(-42 -114 394)" font-size="14.5" font-weight="bold" fill="#ededed" stroke="#f0f0f0" stroke-width="0.6" font-family="Liberation Sans">RationalDMIS</text><text x="-74" y="394" transform="rotate(-42 -74 394)" font-size="14.5" font-weight="bold" fill="#ededed" stroke="#f0f0f0" stroke-width="0.6" font-family="Liberation Sans">RationalDMIS</text><text x="-34" y="394" transform="rotate(-42 -34 394)" font-size="14.5" font-weight="bold" fill="#ededed" stroke="#f0f0f0" stroke-width="0.6" font-family="Liberation Sans">RationalDMIS</text><text x="6" y="394" transform="rotate(-42 6 394)" font-size="14.5" font-weight="bold" fill="#ededed" stroke="#f0f0f0" stroke-width="0.6" font-family="Liberation Sans">RationalDMIS</text><text x="46" y="394" transform="rotate(-42 46 394)" font-size="14.5" font-weight="bold" fill="#ededed" stroke="#f0f0f0" stroke-width="0.6" font-family="Liberation Sans">RationalDMIS</text><text x="86" y="394" transform="rotate(-42 86 394)" font-size="14.5" font-weight="bold" fill="#ededed" stroke="#f0f0f0" stroke-width="0.6" font-family="Liberation Sans">RationalDMIS</text><text x="126" y="394" transform="rotate(-42 126 394)" font-size="14.5" font-weight="bold" fill="#ededed" stroke="#f0f0f0" stroke-width="0.6" font-family="Liberation Sans">RationalDMIS</text><text x="166" y="394" transform="rotate(-42 166 394)" font-size="14.5" font-weight="bold" fill="#ededed" stroke="#f0f0f0" stroke-width="0.6" font-family="Liberation Sans">RationalDMIS</text><text x="206" y="394" transform="rotate(-42 206 394)" font-size="14.5" font-weight="bold" fill="#ededed" stroke="#f0f0f0" stroke-width="0.6" font-family="Liberation Sans">RationalDMIS</text><text x="246" y="394" transform="rotate(-42 246 394)" font-size="14.5" font-weight="bold" fill="#ededed" stroke="#f0f0f0" stroke-width="0.6" font-family="Liberation Sans">RationalDMIS</text><text x="286" y="394" transform="rotate(-42 286 394)" font-size="14.5" font-weight="bold" fill="#ededed" stroke="#f0f0f0" stroke-width="0.6" font-family="Liberation Sans">RationalDMIS</text><text x="-114" y="461" transform="rotate(-42 -114 461)" font-size="14.5" font-weight="bold" fill="#ededed" stroke="#f0f0f0" stroke-width="0.6" font-family="Liberation Sans">RationalDMIS</text><text x="-74" y="461" transform="rotate(-42 -74 461)" font-size="14.5" font-weight="bold" fill="#ededed" stroke="#f0f0f0" stroke-width="0.6" font-family="Liberation Sans">RationalDMIS</text><text x="-34" y="461" transform="rotate(-42 -34 461)" font-size="14.5" font-weight="bold" fill="#ededed" stroke="#f0f0f0" stroke-width="0.6" font-family="Liberation Sans">RationalDMIS</text><text x="6" y="461" transform="rotate(-42 6 461)" font-size="14.5" font-weight="bold" fill="#ededed" stroke="#f0f0f0" stroke-width="0.6" font-family="Liberation Sans">RationalDMIS</text><text x="46" y="461" transform="rotate(-42 46 461)" font-size="14.5" font-weight="bold" fill="#ededed" stroke="#f0f0f0" stroke-width="0.6" font-family="Liberation Sans">RationalDMIS</text><text x="86" y="461" transform="rotate(-42 86 461)" font-size="14.5" font-weight="bold" fill="#ededed" stroke="#f0f0f0" stroke-width="0.6" font-family="Liberation Sans">RationalDMIS</text><text x="126" y="461" transform="rotate(-42 126 461)" font-size="14.5" font-weight="bold" fill="#ededed" stroke="#f0f0f0" stroke-width="0.6" font-family="Liberation Sans">RationalDMIS</text><text x="166" y="461" transform="rotate(-42 166 461)" font-size="14.5" font-weight="bold" fill="#ededed" stroke="#f0f0f0" stroke-width="0.6" font-family="Liberation Sans">RationalDMIS</text><text x="206" y="461" transform="rotate(-42 206 461)" font-size="14.5" font-weight="bold" fill="#ededed" stroke="#f0f0f0" stroke-width="0.6" font-family="Liberation Sans">RationalDMIS</text><text x="246" y="461" transform="rotate(-42 246 461)" font-size="14.5" font-weight="bold" fill="#ededed" stroke="#f0f0f0" stroke-width="0.6" font-family="Liberation Sans">RationalDMIS</text><text x="286" y="461" transform="rotate(-42 286 461)" font-size="14.5" font-weight="bold" fill="#ededed" stroke="#f0f0f0" stroke-width="0.6" font-family="Liberation Sans">RationalDMIS</text></svg>
<div class="a" style="left:712px;top:47px;width:201px;height:12px;background:linear-gradient(#f6f6f6,#e8e8e8)"></div>
<div class="a" style="left:851px;top:48px;width:1px;height:11px;background:#d8d8d8"></div>
<div class="a" style="left:712px;top:59px;width:201px;height:2px;background:#f2d898"></div>
<div class="a hd" style="left:712px;width:139px;text-align:center"><span class="cj">理论</span></div>
<div class="a hd" style="left:852px;width:61px;text-align:right;padding-right:6px"><span class="cj">实际</span></div>
<div class="a" style="left:851px;top:61px;width:1px;height:276px;background:#f0f0f0"></div>
<div class="a" style="left:712px;top:86px;width:201px;height:12px;background:#fddc9c"></div>
<div class="a" style="left:851px;top:86px;width:1px;height:12px;background:#fff0d8"></div>
<div class="a" style="left:716px;top:65px;width:7px;height:7px;border:1px solid #a8a8a8;background:#fff"></div><div class="a" style="left:717.5px;top:68px;width:4px;height:1px;background:#222"></div>
<div class="a" style="left:719px;top:73px;width:1px;height:80px;background:#bcbcbc"></div>
<div class="a" style="left:726px;top:77px;width:7px;height:7px;border:1px solid #a8a8a8;background:#fff"></div><div class="a" style="left:727.5px;top:80px;width:4px;height:1px;background:#222"></div>
<div class="a" style="left:741px;top:85px;width:1px;height:7px;background:#bcbcbc"></div>
<div class="a" style="left:741px;top:92px;width:6px;height:1px;background:#bcbcbc"></div>
<svg class="a" style="left:736px;top:74px" width="11" height="10" viewBox="0 0 11 10"><path d="M0.5 2 Q5 -0.5 10.5 1.5 Q10 7 5.5 9.5 Q1 7 0.5 2Z" fill="#2a70c0"/><path d="M2 2.5 Q5 1 9 2 Q8 5 5.5 6 Q3 5 2 2.5Z" fill="#80c8f8"/></svg>
<div class="a tr" style="left:726px;top:62px"><span class="cj">叶片</span></div>
<div class="a tr" style="left:748px;top:74px;color:#1a1a2a">BLADE1</div>
<div class="a tr" style="left:760px;top:86px;color:#9a9080">GCV_INTER11</div>
<div class="a tr" style="left:853px;top:86px;color:#9a9080">GCV_INTER11</div>
<div class="a" style="left:720px;top:104px;width:6px;height:1px;background:#bcbcbc"></div>
<div class="a tr" style="left:726px;top:98px"><span class="cj">开口叶片</span></div>
<div class="a" style="left:720px;top:116px;width:6px;height:1px;background:#bcbcbc"></div>
<div class="a tr" style="left:726px;top:110px"><span class="cj">单开口叶片</span></div>
<div class="a" style="left:720px;top:129px;width:6px;height:1px;background:#bcbcbc"></div>
<div class="a tr" style="left:726px;top:123px">Firtree<span class="cj">分析</span></div>
<div class="a" style="left:720px;top:141px;width:6px;height:1px;background:#bcbcbc"></div>
<div class="a tr" style="left:726px;top:135px"><span class="cj">波纹度计算</span></div>
<div class="a" style="left:720px;top:153px;width:6px;height:1px;background:#bcbcbc"></div>
<div class="a tr" style="left:726px;top:147px"><span class="cj">叶片分段</span></div>
<div class="a" style="left:712px;top:337px;width:201px;height:12px;background:#f0f0f0"></div>
<div class="a" style="left:713px;top:337px;width:11px;height:11px;border:1px solid #b8dcea;background:linear-gradient(#f4f8fa,#e0ecf0)"></div>
<svg class="a" style="left:716px;top:339px" width="5" height="8" viewBox="0 0 5 8"><path d="M5 0V8L0 4Z" fill="#0a2040"/></svg>
<div class="a" style="left:724px;top:337px;width:142px;height:11px;border:1px solid #b0d8e8;background:#e6eef2"></div>
<div class="a" style="left:901px;top:337px;width:11px;height:11px;border:1px solid #b8dcea;background:linear-gradient(#f4f8fa,#e0ecf0)"></div>
<svg class="a" style="left:905px;top:339px" width="5" height="8" viewBox="0 0 5 8"><path d="M0 0V8L5 4Z" fill="#0a2040"/></svg>
<!--/PANELS-->
<div id="status" class="a"></div>
<div id="task" class="a"></div>
<!--BOTTOM-->
<div class="a" style="left:7px;top:352px;width:68px;height:111px;border:1px solid #ccd4dc;border-radius:4px;background:linear-gradient(#d8e8f8,#eef5fc 10px,#fff 20px)"></div>
<div class="a" style="left:11px;top:364px;width:28px;height:27px;border:1px solid #f4b048;border-radius:4px;background:linear-gradient(#fff4d0,#ffe0a0)"></div>
<div class="a" style="left:43px;top:364px;width:28px;height:27px;border:1px solid #dadada;border-radius:4px;background:linear-gradient(#f4f4f4,#e6e6e6)"></div>
<div class="a" style="left:11px;top:395px;width:28px;height:27px;border:1px solid #dadada;border-radius:4px;background:linear-gradient(#f4f4f4,#e6e6e6)"></div>
<div class="a" style="left:43px;top:395px;width:28px;height:27px;border:1px solid #dadada;border-radius:4px;background:linear-gradient(#f4f4f4,#e6e6e6)"></div>
<div class="a" style="left:11px;top:426px;width:28px;height:27px;border:1px solid #dadada;border-radius:4px;background:linear-gradient(#f4f4f4,#e6e6e6)"></div>
<div class="a" style="left:43px;top:426px;width:28px;height:27px;border:1px solid #dadada;border-radius:4px;background:linear-gradient(#f4f4f4,#e6e6e6)"></div>
<svg class="a" style="left:14px;top:367px" width="22" height="21" viewBox="0 0 22 21"><path d="M3 1 H8 V3 H3Z" fill="#888"/><path d="M5 3 V15" stroke="#777" stroke-width="1.6"/><circle cx="5" cy="16" r="1.3" fill="#e02020"/><path d="M8 8 L14 5 L21 8 V16 L14 20 L8 16Z" fill="#1a5aa8"/><path d="M8 8 L14 5 L21 8 L14 11Z" fill="#60b8f8"/><path d="M14 11 L21 8 V16 L14 20Z" fill="#2a78c8"/></svg>
<svg class="a" style="left:45px;top:367px" width="24" height="21" viewBox="0 0 24 21"><path d="M8 1 L8 14 L22 14Z" fill="#b8d8f8" stroke="#3a80d0" stroke-width="1.3"/><path d="M11 8 L11 11 L15 11Z" fill="#fff"/><rect x="1" y="13" width="22" height="4" fill="#5aa0e8" stroke="#2a68b8" stroke-width="0.8"/><rect x="3" y="8" width="3" height="12" rx="1" fill="#4a90e0"/></svg>
<svg class="a" style="left:17px;top:398px" width="16" height="22" viewBox="0 0 16 22"><rect x="3" y="1" width="10" height="9" rx="2" fill="#1a1a1a"/><circle cx="8" cy="5" r="1.5" fill="#e02020"/><rect x="5" y="10" width="6" height="4" fill="#333"/><path d="M8 14 L5 20" stroke="#a0a0a0" stroke-width="1.3"/><circle cx="4.5" cy="20.5" r="1" fill="#e02020"/></svg>
<svg class="a" style="left:45px;top:397px" width="24" height="23" viewBox="0 0 24 23"><path d="M4 9 L12 6 L21 9 V18 L12 22 L4 18Z" fill="#d8a878" stroke="#8a5a30" stroke-width="0.8"/><path d="M12 12 V22 M4 9 L12 12 L21 9" stroke="#8a5a30" stroke-width="0.8" fill="none"/><rect x="2" y="1" width="20" height="7" fill="#d8c040" stroke="#6a5a10" stroke-width="0.7"/><rect x="4" y="2.5" width="4" height="4" fill="#fff8c0" stroke="#333" stroke-width="0.5"/><rect x="10" y="2.5" width="4" height="4" fill="#fff8c0" stroke="#333" stroke-width="0.5"/><rect x="16" y="2.5" width="4" height="4" fill="#fff8c0" stroke="#333" stroke-width="0.5"/></svg>
<svg class="a" style="left:14px;top:429px" width="22" height="21" viewBox="0 0 22 21"><path d="M9 14 V3" stroke="#1a40d0" stroke-width="2"/><path d="M6 5 L9 0.5 L12 5Z" fill="#1a40d0"/><path d="M9 14 H19" stroke="#e02020" stroke-width="2"/><path d="M17 11 L21 14 L17 17Z" fill="#e02020"/><path d="M9 14 L3 19" stroke="#20a030" stroke-width="2"/><path d="M1 17 L2 20.5 L5 19.5Z" fill="#20a030"/></svg>
<svg class="a" style="left:45px;top:428px" width="24" height="23" viewBox="0 0 24 23"><rect x="6" y="2" width="4" height="8" fill="#e0e0d0" stroke="#555" stroke-width="0.6"/><path d="M2 10 H14 V20 H2Z" fill="#2a2a2a"/><path d="M1 20 H16 L14 22 H3Z" fill="#555"/><rect x="4" y="13" width="6" height="4" fill="#c8c8c8"/><path d="M18 3 Q17 1 19 1 L19 4 L21 4 L21 1 Q23 1 22 3 L21 6 V15 L22 18 Q23 21 21 21 L21 18 L19 18 L19 21 Q17 21 18 18 L19 15 V6Z" fill="#f0f0f0" stroke="#666" stroke-width="0.7"/></svg>
<div class="a" style="left:75px;top:352px;width:655px;height:111px;border:1px solid #c8d0d8;border-radius:4px;background:#fff;overflow:hidden"></div>
<div class="a" style="left:76px;top:353px;width:653px;height:20px;background:linear-gradient(#c4dcf6,#dceafa 8px,#f8fbff)"></div>
<div class="a" style="left:76px;top:373px;width:653px;height:1px;background:#d8dde4"></div>
<div class="a" style="left:192px;top:374px;width:1px;height:88px;background:#e4e8ec"></div>
<div class="a" style="left:193px;top:391px;width:536px;height:1px;background:#e4e8ec"></div>
<div class="a" style="left:100px;top:355px;width:18px;height:17px;border:1px solid #f0a838;border-radius:3px;background:linear-gradient(#fff2c8,#ffd880)"></div>
<svg class="a" style="left:106px;top:361px" width="6" height="6" viewBox="0 0 6 6"><circle cx="3" cy="3" r="2" fill="#fff" stroke="#2a50a0" stroke-width="1.2"/></svg>
<svg class="a" style="left:80px;top:356px" width="16" height="15" viewBox="0 0 16 15"><rect x="1" y="1" width="7" height="7" rx="2" fill="#1a1a2a"/><circle cx="4.5" cy="4.5" r="1.4" fill="#fff"/><path d="M8 5 L15 13 L11 14Z" fill="#f0d060" stroke="#a08020" stroke-width="0.6"/><circle cx="6" cy="10" r="1.2" fill="#e02020"/></svg>
<svg class="a" style="left:123px;top:356px" width="16" height="15" viewBox="0 0 16 15"><path d="M1 9 L7 7 L15 9 V13 L7 15 L1 13Z" fill="#c8d8f0" stroke="#6a88c0" stroke-width="0.6"/><path d="M5 8 V2" stroke="#20a030" stroke-width="1.8"/><path d="M3 3.5 L5 0.5 L7 3.5Z" fill="#20a030"/><path d="M6 10 L13 8" stroke="#20a030" stroke-width="1.6"/><circle cx="11" cy="11" r="1.6" fill="#e03020"/></svg>
<svg class="a" style="left:144px;top:357px" width="15" height="14" viewBox="0 0 15 14"><path d="M1.5 12.5 L13.5 1.5" stroke="#3a58a8" stroke-width="3" stroke-linecap="round"/><path d="M1.5 12.5 L13.5 1.5" stroke="#c8d8f8" stroke-width="1.2" stroke-linecap="round"/></svg>
<svg class="a" style="left:166px;top:358px" width="15" height="12" viewBox="0 0 15 12"><path d="M4 1 H14 L11 11 H1Z" fill="#f0f4ff" stroke="#3a58a8" stroke-width="1.3"/></svg>
<svg class="a" style="left:187.9px;top:357px" width="14" height="14" viewBox="0 0 14 14"><circle cx="6.5" cy="6.5" r="5.5" fill="none" stroke="#4a6ab8" stroke-width="1.4"/><circle cx="6.5" cy="6.5" r="3.5" fill="none" stroke="#4a6ab8" stroke-width="1.4"/></svg>
<svg class="a" style="left:210.0px;top:357px" width="14" height="14" viewBox="0 0 14 14"><path d="M0.8 5 Q7 -0.5 13.2 5" fill="none" stroke="#4a6ab8" stroke-width="1.5"/><path d="M3 7 Q7 4 11 7" fill="none" stroke="#4a6ab8" stroke-width="1.4"/><circle cx="7" cy="10.5" r="1.4" fill="#4a6ab8"/></svg>
<svg class="a" style="left:231.5px;top:357px" width="14" height="14" viewBox="0 0 14 14"><circle cx="6.5" cy="6.5" r="6" fill="#3a58a8"/><circle cx="5.5" cy="5.5" r="4" fill="#e8eefc"/><circle cx="4.5" cy="4.5" r="2" fill="#fff"/></svg>
<svg class="a" style="left:253.0px;top:357px" width="14" height="14" viewBox="0 0 14 14"><path d="M1.5 2.5 V11.5 Q6 14 10.5 11.5 V2.5Z" fill="#c8d4f0" stroke="#4a6ab8" stroke-width="1.1"/><ellipse cx="6" cy="2.5" rx="4.5" ry="1.8" fill="#eef2fc" stroke="#4a6ab8" stroke-width="1"/><rect x="7" y="4" width="2.5" height="8" fill="#7a94cc"/></svg>
<svg class="a" style="left:274.5px;top:357px" width="14" height="14" viewBox="0 0 14 14"><path d="M6.5 0.5 L12 11 Q6.5 14 1 11Z" fill="#c8d4f0" stroke="#4a6ab8" stroke-width="1"/><path d="M6.5 1 L9 12" stroke="#7a94cc" stroke-width="2"/></svg>
<svg class="a" style="left:296.0px;top:357px" width="14" height="14" viewBox="0 0 14 14"><ellipse cx="7" cy="6.5" rx="6.3" ry="5" fill="none" stroke="#4a6ab8" stroke-width="1.4"/><ellipse cx="7" cy="6.5" rx="4" ry="2.8" fill="none" stroke="#4a6ab8" stroke-width="1.3"/></svg>
<svg class="a" style="left:318.5px;top:357px" width="14" height="14" viewBox="0 0 14 14"><rect x="0.8" y="2" width="12.4" height="9" rx="4.5" fill="none" stroke="#4a6ab8" stroke-width="1.4"/><rect x="3.5" y="4.5" width="7" height="4" rx="2" fill="none" stroke="#4a6ab8" stroke-width="1.2"/></svg>
<svg class="a" style="left:339.4px;top:357px" width="14" height="14" viewBox="0 0 14 14"><path d="M0.5 4 L8 2.5 V10.5 L0.5 12Z" fill="#b8c8ec" stroke="#4a6ab8" stroke-width="0.9"/><path d="M5 2 L12.5 0.8 V8.8 L5 10Z" fill="#d8e2f6" stroke="#4a6ab8" stroke-width="0.9"/></svg>
<svg class="a" style="left:360.7px;top:357px" width="14" height="14" viewBox="0 0 14 14"><circle cx="6.5" cy="6.5" r="5.8" fill="#e4eafa" stroke="#4a6ab8" stroke-width="1.4"/><circle cx="6.5" cy="6.5" r="2.8" fill="none" stroke="#4a6ab8" stroke-width="1.4"/><circle cx="6.5" cy="6.5" r="1" fill="#4a6ab8"/></svg>
<svg class="a" style="left:382.8px;top:357px" width="14" height="14" viewBox="0 0 14 14"><path d="M2 11 Q1 7 5 7 Q9 7 8 3.5 Q8 1.5 11.5 2" fill="none" stroke="#4a6ab8" stroke-width="2.6" stroke-linecap="round"/><path d="M2 11 Q1 7 5 7 Q9 7 8 3.5 Q8 1.5 11.5 2" fill="none" stroke="#d0dcf8" stroke-width="1" stroke-linecap="round"/></svg>
<svg class="a" style="left:404.0px;top:357px" width="14" height="14" viewBox="0 0 14 14"><path d="M1 6 L6 1 Q9 3 12 2.5 V7 L7 12.5 Q4 10 1 10.5Z" fill="#c0d0f0" stroke="#4a6ab8" stroke-width="1.2"/><path d="M6 1 L7 12.5" stroke="#4a6ab8" stroke-width="1"/></svg>
<svg class="a" style="left:426.2px;top:357px" width="14" height="14" viewBox="0 0 14 14"><path d="M6.5 0.8 L12 4 V10 L6.5 13.2 L1 10 V4Z" fill="none" stroke="#4a6ab8" stroke-width="1.3"/><path d="M6.5 3 L9.8 5 V9 L6.5 11 L3.2 9 V5Z" fill="none" stroke="#4a6ab8" stroke-width="1.1"/></svg>
<svg class="a" style="left:447.3px;top:357px" width="14" height="14" viewBox="0 0 14 14"><ellipse cx="6.5" cy="8" rx="6" ry="4.2" fill="#4a68b8"/><ellipse cx="6.5" cy="6" rx="5.9" ry="4" fill="#e8eefc" stroke="#4a6ab8" stroke-width="1"/><ellipse cx="4.8" cy="5.8" rx="1.8" ry="1.2" fill="#2a3a80"/></svg>
<svg class="a" style="left:469.0px;top:357px" width="14" height="14" viewBox="0 0 14 14"><circle cx="6.5" cy="6.5" r="6" fill="#5a78c8"/><path d="M1 6 H12 M6.5 0.5 V12.5 M2.5 2.5 L10.5 10.5 M10.5 2.5 L2.5 10.5" stroke="#f0f4ff" stroke-width="0.9"/><circle cx="6.5" cy="6" r="3.2" fill="#c8d4f4" stroke="#4a6ab8" stroke-width="0.8"/><circle cx="6.5" cy="6" r="1.2" fill="#4a6ab8"/></svg>
<svg class="a" style="left:490.2px;top:357px" width="14" height="14" viewBox="0 0 14 14"><path d="M1.5 4 Q5 1 8 4 L11.5 9" fill="none" stroke="#4a6ab8" stroke-width="3" stroke-linecap="round"/><path d="M2 3.5 Q5 2 7.5 4" fill="none" stroke="#d0e0fc" stroke-width="1"/><path d="M10 9.5 L12.5 11" stroke="#1a2a60" stroke-width="2"/></svg>
<div class="a" style="left:83px;top:380.5px;width:100px;height:70px;border-radius:4px;background:linear-gradient(#2a2a2a,#343434 14px,#3e3e3e 27px,#262626 28px,#222 50px,#1e1e1e 70px)"></div>
<div class="a" style="left:84px;top:451px;width:98px;height:8px;background:linear-gradient(#d4d4d4,#ececec 5px,#fff)"></div>
<svg class="a" style="left:83px;top:380px" width="100" height="70" viewBox="83 380 100 70"><g fill="none"><rect x="90.15" y="388" width="11" height="16.6" rx="5.5" ry="6.5" stroke="#4a6e98" stroke-width="3.2"/><rect x="90.15" y="410.7" width="11" height="16.6" rx="5.5" ry="6.5" stroke="#4a6e98" stroke-width="3.2"/><rect x="111.15" y="396.1" width="24" height="37.8" rx="12" ry="15" stroke="#3ddca0" stroke-width="6.6"/><rect x="148.4" y="396.1" width="24" height="37.8" rx="12" ry="15" stroke="#3ddca0" stroke-width="6.6"/></g></svg>
<div class="a" style="left:199px;top:395px;width:150px;height:62px;border-radius:4px;background:linear-gradient(#262626,#2a2a2a 14px,#3c3c3c 15px,#3c3c3c 23px,#2e2e2e 24px,#262626 40px,#232323 62px)"></div>
<div class="a" style="left:200px;top:409px;width:148px;height:1px;background:#8a8258"></div>
<div class="a" style="left:201px;top:425px;width:146px;height:1.5px;background:#5a90d8"></div>
<div class="a" style="left:200px;top:441px;width:148px;height:1px;background:#8a8258"></div>
<div class="a" style="left:199px;top:457px;width:150px;height:5px;background:linear-gradient(#d0d0d0,#f4f4f4)"></div>
<div class="a lb" style="left:201px;top:378px"><span class="cj">名称</span></div>
<div class="a inp" style="left:229px;top:376px;width:65px;height:14px;border-color:#b8c8d8;background:linear-gradient(#f8f8f8,#fff)"></div>
<div class="a lb" style="left:232px;top:378px">PT1</div>
<div class="a" style="left:298px;top:376px;width:43px;height:14px;border:1px solid #98b0c8;border-radius:3px;background:linear-gradient(#fafafa,#e8e8e8)"></div>
<div class="a lb" style="left:303px;top:378px"><span class="cj">工作平面</span></div>
<div class="a inp" style="left:358px;top:377px;width:84px;height:13px;border-color:#c0ccd8"></div>
<div class="a lb" style="left:361px;top:378px"><span class="cj">最靠近的</span>CRD<span class="cj">平面</span></div>
<svg class="a" style="left:432px;top:381px" width="7" height="4" viewBox="0 0 7 4"><path d="M0 0H7L3.5 4Z" fill="#0a2a50"/></svg>
<div class="a" style="left:457px;top:377px;width:20px;height:14px;border:1px solid #dadada;border-bottom:none;border-radius:3px 3px 0 0;background:linear-gradient(#fafafa,#ececec)"></div>
<div class="a" style="left:478px;top:377px;width:21px;height:15px;border:1px solid #78b8e0;border-bottom:none;border-radius:3px 3px 0 0;background:linear-gradient(#f0f8ff,#dceefc)"></div>
<div class="a" style="left:500px;top:377px;width:20px;height:14px;border:1px solid #dadada;border-bottom:none;border-radius:3px 3px 0 0;background:linear-gradient(#fafafa,#ececec)"></div>
<div class="a" style="left:521px;top:377px;width:20px;height:14px;border:1px solid #dadada;border-bottom:none;border-radius:3px 3px 0 0;background:linear-gradient(#fafafa,#ececec)"></div>
<div class="a" style="left:543px;top:377px;width:20px;height:14px;border:1px solid #dadada;border-bottom:none;border-radius:3px 3px 0 0;background:linear-gradient(#fafafa,#ececec)"></div>
<svg class="a" style="left:461px;top:379px" width="13" height="11" viewBox="0 0 13 11"><path d="M1 4 L5 2 L9 4 V9 L5 11 L1 9Z" fill="#1a4a90"/><path d="M1 4 L5 2 L9 4 L5 6Z" fill="#5aa8f0"/><rect x="9" y="1" width="3" height="9" fill="#e0e0e0" stroke="#666" stroke-width="0.5"/></svg>
<svg class="a" style="left:481px;top:379px" width="15" height="11" viewBox="0 0 15 11"><rect x="0.5" y="0.5" width="14" height="10" fill="#1a3a78" stroke="#6a8ac8" stroke-width="0.8"/><path d="M2 7 Q4 2 6 5 Q8 8 10 4 Q11 2 13 4" stroke="#c8e0ff" stroke-width="1" fill="none"/></svg>
<svg class="a" style="left:503px;top:379px" width="14" height="11" viewBox="0 0 14 11"><rect x="2" y="1" width="11" height="9.5" fill="#f8f8f8" stroke="#555" stroke-width="0.7"/><path d="M2 4H13M2 6.5H13M5 1V10.5M8 1V10.5M10.5 1V10.5" stroke="#777" stroke-width="0.5"/><path d="M1 0 V10" stroke="#c02020" stroke-width="1.5"/></svg>
<svg class="a" style="left:524px;top:379px" width="14" height="12" viewBox="0 0 14 12"><path d="M2 2 Q0 9 6 11 Q12 11 11 5" stroke="#3a80d8" stroke-width="2.6" fill="none"/><path d="M8 0 L9.5 3 L11 0" stroke="#555" stroke-width="1" fill="none"/><circle cx="9.5" cy="5" r="1" fill="#e02020"/></svg>
<svg class="a" style="left:546px;top:379px" width="14" height="11" viewBox="0 0 14 11"><rect x="4" y="1" width="9.5" height="9" fill="#e8eef8" stroke="#4a6ab0" stroke-width="0.8"/><path d="M6 4H12M6 6H12M6 8H12" stroke="#6a8ac0" stroke-width="0.7"/><path d="M0.5 4 L4 2.5 L7.5 4 V9 L4 10.5 L0.5 9Z" fill="#1a5aa8"/><path d="M0.5 4 L4 2.5 L7.5 4 L4 5.5Z" fill="#6ab8f8"/></svg>
<div class="a" style="left:353px;top:392px;width:376px;height:1px;background:#e4e8ec"></div>
<div class="a lb" style="left:354px;top:397px"><span class="cj">挨到理论</span></div>
<svg class="a" style="left:393px;top:397px" width="9" height="8" viewBox="0 0 9 8"><path d="M4.5 0.5 L8.5 7.5 H0.5Z" fill="#f8d020" stroke="#806000" stroke-width="0.8"/><path d="M4.5 2.8V5" stroke="#111" stroke-width="1"/><circle cx="4.5" cy="6.3" r="0.5" fill="#111"/></svg>
<div class="a inp" style="left:405px;top:396px;width:46px;height:12px"></div>
<div class="a inp" style="left:452px;top:396px;width:54px;height:12px;border-color:#c8d0d8"></div>
<div class="a lb" style="left:455px;top:397px"><span class="cj">投影</span></div>
<svg class="a" style="left:497px;top:400px" width="7" height="4" viewBox="0 0 7 4"><path d="M0 0H7L3.5 4Z" fill="#0a2a50"/></svg>
<svg class="a" style="left:508px;top:397px" width="9" height="8" viewBox="0 0 9 8"><path d="M4.5 0.5 L8.5 7.5 H0.5Z" fill="#f8d020" stroke="#806000" stroke-width="0.8"/><path d="M4.5 2.8V5" stroke="#111" stroke-width="1"/><circle cx="4.5" cy="6.3" r="0.5" fill="#111"/></svg>
<div class="a inp" style="left:520px;top:396px;width:46px;height:12px"></div>
<div class="a" style="left:354px;top:411px;width:213px;height:32px;border:1px solid #e4e4e4;background:#fff"></div>
<div class="a lb" style="left:357px;top:415px"><span class="cj">下公差</span></div>
<div class="a lb" style="left:357px;top:429px"><span class="cj">上公差</span></div>
<div class="a inp" style="left:384px;top:414px;width:47px;height:13px"></div>
<div class="a inp" style="left:384px;top:428px;width:47px;height:13px"></div>
<div class="a lb" style="left:388px;top:415px">-0.0100</div>
<div class="a lb" style="left:388px;top:429px">0.0100</div>
<div class="a lb" style="left:437px;top:415px"><span class="cj">当前误差</span></div>
<div class="a lb" style="left:437px;top:429px"><span class="cj">最大误差</span></div>
<div class="a inp" style="left:474px;top:414px;width:38px;height:13px;background:#dae8f8;border-color:#b8d0ec"></div>
<div class="a inp" style="left:514px;top:414px;width:49px;height:13px;background:#dae8f8;border-color:#b8d0ec"></div>
<div class="a lb" style="left:477px;top:415px;color:#a8b8c8">At : 1</div>
<div class="a lb" style="left:517px;top:415px;color:#a8b8c8">0.000000</div>
<div class="a inp" style="left:474px;top:428px;width:38px;height:13px;background:#dae8f8;border-color:#b8d0ec"></div>
<div class="a inp" style="left:514px;top:428px;width:49px;height:13px;background:#dae8f8;border-color:#b8d0ec"></div>
<div class="a lb" style="left:477px;top:429px;color:#a8b8c8">At : 1</div>
<div class="a lb" style="left:517px;top:429px;color:#a8b8c8">0.000000</div>
<div class="a" style="left:354px;top:448px;width:10px;height:10px;border:1px solid #90a8c0;border-radius:2px;background:#fff"></div>
<svg class="a" style="left:355px;top:449px" width="9" height="9" viewBox="0 0 9 9"><path d="M1.5 4.5 L3.5 7 L8 1.5" stroke="#20a020" stroke-width="1.5" fill="none"/></svg>
<div class="a lb" style="left:367px;top:448px"><span class="cj">实时计算</span></div>
<svg class="a" style="left:514px;top:447px" width="13" height="12" viewBox="0 0 13 12"><rect x="0.5" y="2" width="10" height="9.5" fill="#c8c8c8" stroke="#888" stroke-width="0.6"/><path d="M3 9 L11 1 L12.5 2.5 L4.5 10.5Z" fill="#e8e8e8" stroke="#777" stroke-width="0.6"/></svg>
<svg class="a" style="left:533px;top:447px" width="12" height="12" viewBox="0 0 12 12"><path d="M1 6 L6 1 L10 5 L5 10Z" fill="#d8d8d8" stroke="#888" stroke-width="0.7"/><circle cx="9" cy="9.5" r="1.8" fill="#555"/></svg>
<svg class="a" style="left:554px;top:447px" width="11" height="12" viewBox="0 0 11 12"><rect x="0.5" y="1" width="10" height="10" fill="#b8f0b0" stroke="#2a8a2a" stroke-width="0.9"/><path d="M2.5 6 L4.5 8.5 L9 2" stroke="#108010" stroke-width="1.6" fill="none"/></svg>
<div class="a" style="left:731px;top:352px;width:185px;height:111px;border:1px solid #c8d0d8;border-radius:4px;background:#f0f2f6"></div>
<div class="a" style="left:735px;top:355px;width:163px;height:107px;border-radius:6px 0 0 6px;background:linear-gradient(#dfeafa,#fff 10px,#fff);box-shadow:0 0 0 1px #e8ecf0"></div>
<div class="a lb" style="left:754px;top:363px"><span class="cj">接近距离</span></div>
<div class="a lb" style="left:754px;top:379px"><span class="cj">回退距离</span></div>
<div class="a lb" style="left:754px;top:395px"><span class="cj">深度</span></div>
<div class="a lb" style="left:754px;top:428px"><span class="cj">搜索距离</span></div>
<div class="a inp" style="left:755px;top:411px;width:69px;height:14px;border-color:#a8c0dc"></div>
<div class="a lb" style="left:758px;top:412.5px"><span class="cj">间距面</span></div>
<svg class="a" style="left:813px;top:416px" width="7" height="4" viewBox="0 0 7 4"><path d="M0 0H7L3.5 4Z" fill="#0a2a50"/></svg>
<div class="a inp" style="left:833px;top:361px;width:57px;height:13px;border-color:#a8c0dc"></div>
<div class="a lb" style="left:837px;top:362px">2.0000</div>
<div class="a inp" style="left:833px;top:378px;width:57px;height:13px;border-color:#a8c0dc"></div>
<div class="a lb" style="left:837px;top:379px">2.0000</div>
<div class="a inp" style="left:833px;top:394px;width:57px;height:13px;border-color:#a8c0dc"></div>
<div class="a lb" style="left:837px;top:395px">4.0000</div>
<div class="a inp" style="left:833px;top:411px;width:57px;height:13px;border-color:#a8c0dc"></div>
<div class="a lb" style="left:837px;top:412px">10.0000</div>
<div class="a inp" style="left:833px;top:427px;width:57px;height:13px;border-color:#a8c0dc"></div>
<div class="a lb" style="left:837px;top:428px">20.0000</div>
<div class="a" style="left:856px;top:444px;width:33px;height:13px;border:1px solid #98b0c8;border-radius:3px;background:linear-gradient(#fafafa,#e4e4e4)"></div>
<div class="a lb" style="left:864px;top:445px"><span class="cj">应用</span></div>
<div class="a" style="left:898px;top:355px;width:15px;height:107px;background:#f4f4f4"></div>
<div class="a" style="left:897px;top:436px;width:16px;height:17px;border:1px solid #a8cce8;border-right:none;border-radius:3px 0 0 3px;background:#fff"></div>
<svg class="a" style="left:899px;top:359px" width="13" height="13" viewBox="0 0 13 13"><rect x="4" y="1" width="4" height="4" fill="#d0d0b0" stroke="#555" stroke-width="0.5"/><path d="M1 5 H11 V12 H1Z" fill="#1a1a1a"/><rect x="3" y="7" width="3" height="3" fill="#8a8060"/></svg>
<svg class="a" style="left:899px;top:377px" width="13" height="13" viewBox="0 0 13 13"><rect x="1" y="1" width="9" height="8" fill="#3a68b8" stroke="#1a3a80" stroke-width="0.6"/><path d="M5 9 V12" stroke="#555" stroke-width="1.3"/><path d="M8 5 L12 7 V12 L8 10Z" fill="#1a4a90"/></svg>
<svg class="a" style="left:899px;top:397px" width="13" height="13" viewBox="0 0 13 13"><circle cx="5.5" cy="5.5" r="4.3" fill="#a8d0f0" stroke="#2a5aa8" stroke-width="1.4"/><path d="M8.5 8.5 L12 12" stroke="#222" stroke-width="2"/></svg>
<svg class="a" style="left:899px;top:417px" width="13" height="13" viewBox="0 0 13 13"><path d="M1 1 L3.5 4.5 L6 1" stroke="#555" stroke-width="1.1" fill="none"/><rect x="2.8" y="4" width="1.4" height="5" fill="#777"/><circle cx="3.5" cy="9" r="1.1" fill="#e02020"/><path d="M5.5 7 L9 5 L12.5 7 V11 L9 13 L5.5 11Z" fill="#2a78c8"/></svg>
<svg class="a" style="left:899px;top:438px" width="13" height="13" viewBox="0 0 13 13"><circle cx="6.5" cy="6.5" r="4.5" fill="none" stroke="#e8a020" stroke-width="2.6" stroke-dasharray="2 1.5"/><circle cx="6.5" cy="6.5" r="3.5" fill="none" stroke="#e8a020" stroke-width="1.5"/><circle cx="6.5" cy="6.5" r="1.5" fill="#fff" stroke="#c08010" stroke-width="0.6"/></svg>
<svg class="a" style="left:898px;top:456px" width="15" height="6" viewBox="0 0 15 6"><path d="M0.5 1H6.5L3.5 5.5Z" fill="#0a2a60"/><path d="M8 5.5H14L11 1Z" fill="#0a2a60"/></svg>
<div class="a inp" style="left:655px;top:470px;width:57px;height:13px;border-color:#a8c0dc;border-radius:3px"></div>
<div class="a lb" style="left:658px;top:471px"><span class="cj">毫米</span></div>
<svg class="a" style="left:702px;top:474px" width="7" height="4" viewBox="0 0 7 4"><path d="M0 0H7L3.5 4Z" fill="#0a2a50"/></svg>
<div class="a inp" style="left:721px;top:470px;width:57px;height:13px;border-color:#a8c0dc;border-radius:3px"></div>
<div class="a lb" style="left:724px;top:471px"><span class="cj">角度</span></div>
<svg class="a" style="left:768px;top:474px" width="7" height="4" viewBox="0 0 7 4"><path d="M0 0H7L3.5 4Z" fill="#0a2a50"/></svg>
<div class="a inp" style="left:787px;top:470px;width:44px;height:13px;border-color:#a8c0dc;border-radius:3px"></div>
<div class="a lb" style="left:790px;top:471px">Cart</div>
<svg class="a" style="left:821px;top:474px" width="7" height="4" viewBox="0 0 7 4"><path d="M0 0H7L3.5 4Z" fill="#0a2a50"/></svg>
<div class="a" style="left:843px;top:470px;width:14px;height:13px;border:1px solid #78b0e0;border-radius:3px;background:linear-gradient(#e8f4ff,#c8e0f8)"></div>
<div class="a" style="left:862px;top:470px;width:14px;height:13px;border:1px solid #f0a838;border-radius:3px;background:linear-gradient(#fff2c8,#ffd880)"></div>
<div class="a" style="left:881px;top:470px;width:14px;height:13px;border:1px solid #f0a838;border-radius:3px;background:linear-gradient(#fff2c8,#ffd880)"></div>
<div class="a" style="left:899px;top:470px;width:14px;height:13px;border:1px solid #78b0e0;border-radius:3px;background:linear-gradient(#e8f4ff,#c8e0f8)"></div>
<svg class="a" style="left:845px;top:472px" width="10" height="9" viewBox="0 0 10 9"><rect x="1" y="1" width="8" height="7" fill="#c8d4f0"/><path d="M1 8 H9 V1" stroke="#e02020" stroke-width="1" fill="none"/><circle cx="1" cy="8" r="1" fill="#e02020"/><circle cx="9" cy="1" r="1" fill="#e02020"/></svg>
<svg class="a" style="left:864px;top:472px" width="10" height="9" viewBox="0 0 10 9"><circle cx="5" cy="4" r="3.5" fill="#d82020"/><rect x="2" y="7" width="6" height="1.5" fill="#2060c0"/><rect x="4" y="0" width="2" height="1.5" fill="#333"/></svg>
<svg class="a" style="left:883px;top:472px" width="10" height="9" viewBox="0 0 10 9"><path d="M1 0.5 L3 4 L5 0.5 M3 4 V8" stroke="#444" stroke-width="1" fill="none"/><path d="M8 1 Q8 7 4 8" stroke="#a02020" stroke-width="1" fill="none"/></svg>
<svg class="a" style="left:901px;top:472px" width="10" height="9" viewBox="0 0 10 9"><rect x="0.5" y="0.5" width="4" height="3.5" fill="#20a020"/><rect x="5.5" y="5" width="4" height="3.5" fill="#e02020"/><path d="M1 8 L9 1" stroke="#555" stroke-width="1"/></svg>
<div class="a" style="left:496px;top:491.5px;width:32px;height:4.5px;background:#4a5a62"></div>
<div class="a" style="left:850px;top:493.5px;font-size:9px;line-height:9px;color:#e8eef0">17:01</div>
<!--/BOTTOM-->
</body></html>
